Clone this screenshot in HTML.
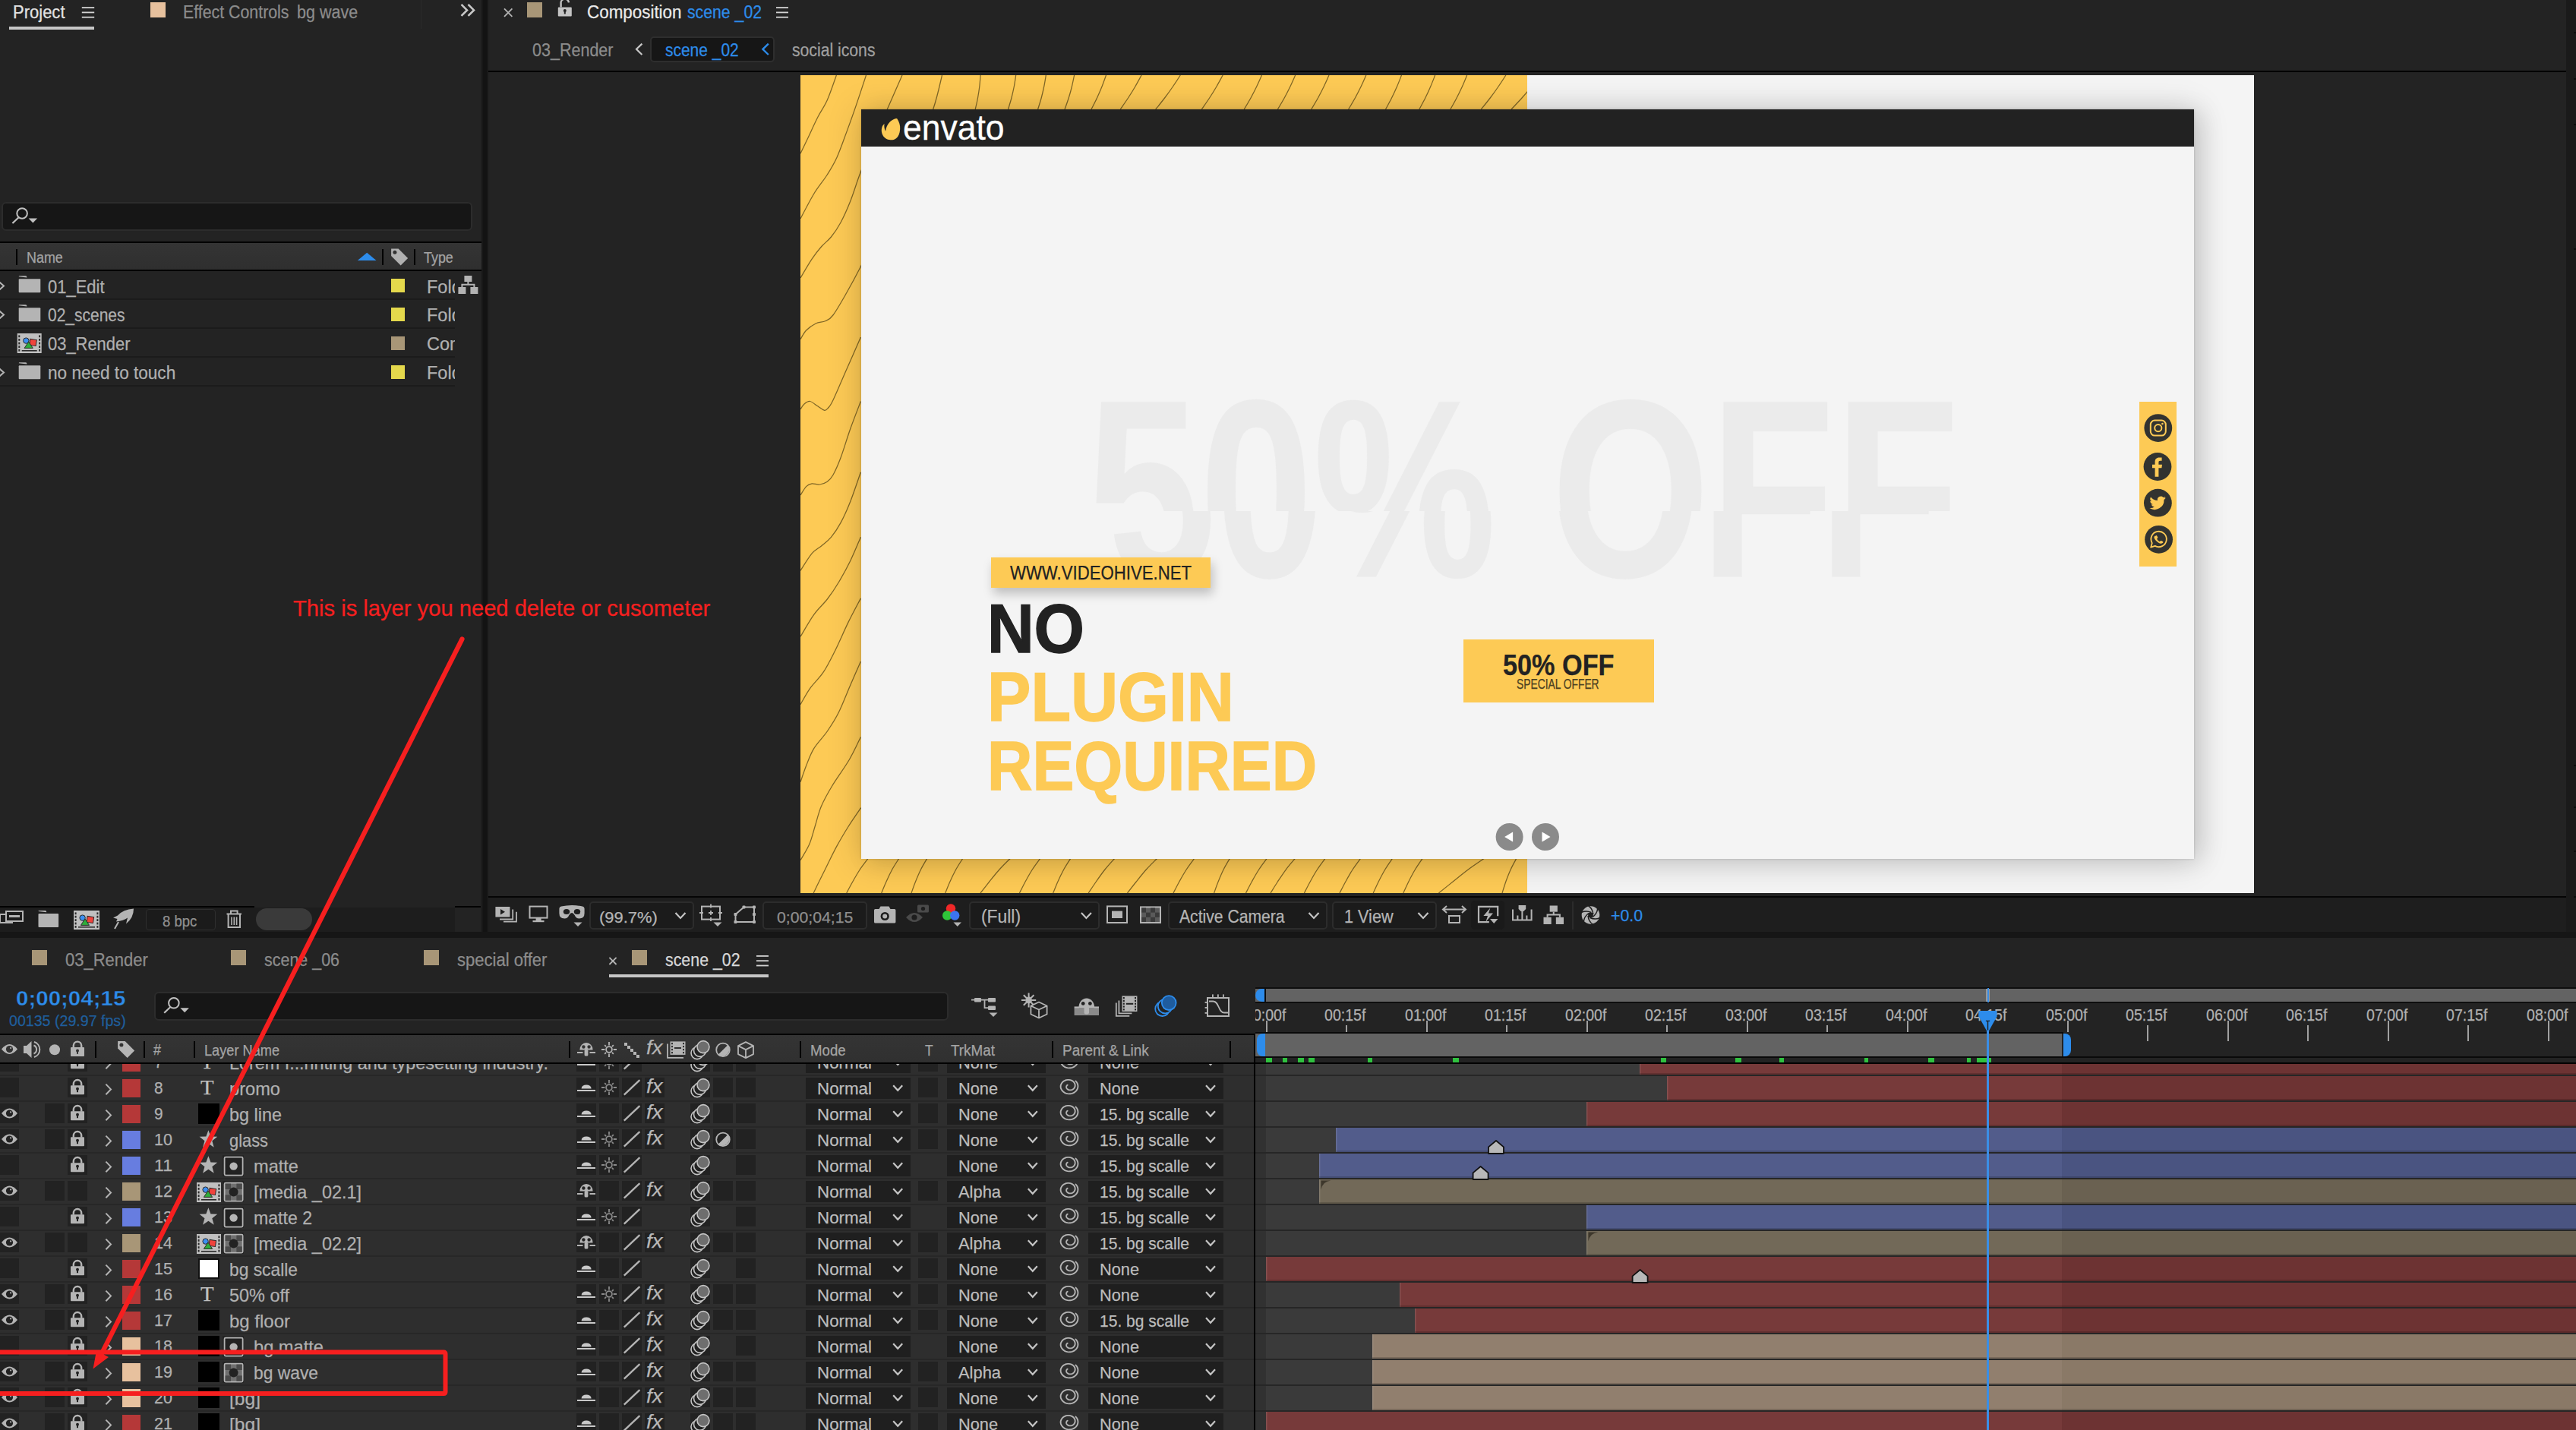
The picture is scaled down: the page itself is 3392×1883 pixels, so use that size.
<!DOCTYPE html><html lang="en"><head><meta charset="utf-8"><title>After Effects – scene _02</title><style>
html,body{margin:0;padding:0;background:#232323;}
body{width:3392px;height:1883px;position:relative;overflow:hidden;font-family:"Liberation Sans",sans-serif;}
#root{position:absolute;left:0;top:0;width:3392px;height:1883px;overflow:hidden;}
#root div,#root svg,#root span.t{position:absolute;}
span.t{white-space:pre;transform-origin:left center;display:block;-webkit-text-stroke:0.25px currentColor;}
svg{overflow:visible;}svg.clip{overflow:hidden;}
</style></head><body><div id="root"><div style="left:634px;top:0px;width:9px;height:1228px;background:#181818;"></div><div style="left:636px;top:0px;width:5px;height:1228px;background:#131313;"></div><span class="t" id="t1" style="font-size:23px;line-height:23px;color:#e2e2e2;transform:scaleX(0.9568);left:16.6px;top:4.93px;">Project</span><div style="left:12px;top:35.2px;width:112px;height:3.8px;background:#c6c6c6;"></div><div style="left:198px;top:3px;width:20px;height:20px;background:#e7c19e;"></div><span class="t" id="t2" style="font-size:23px;line-height:23px;color:#8c8c8c;transform:scaleX(0.9274);left:241.2px;top:4.93px;">Effect Controls</span><span class="t" id="t3" style="font-size:23px;line-height:23px;color:#8c8c8c;transform:scaleX(0.9350);left:390.7px;top:4.93px;">bg wave</span><div style="left:554px;top:0px;width:1px;height:38px;background:#2b2b2b;"></div><div style="left:2px;top:265.6px;width:620px;height:38.4px;background:#161616;border:2px solid #2c2c2c;border-radius:6px;box-sizing:border-box;"></div><div style="left:0px;top:317.7px;width:633.5px;height:2px;background:#000;"></div><div style="left:0px;top:319.7px;width:633.5px;height:35.3px;background:linear-gradient(#343434,#2f2f2f);"></div><div style="left:0px;top:355px;width:633.5px;height:2px;background:#000;"></div><div style="left:21.4px;top:327.8px;width:2px;height:21px;background:#000;"></div><div style="left:503px;top:327.8px;width:2px;height:21px;background:#000;"></div><div style="left:545px;top:327.8px;width:2px;height:21px;background:#000;"></div><span class="t" id="t4" style="font-size:20.5px;line-height:20.5px;color:#a4a4a4;transform:scaleX(0.8741);left:34.5px;top:328.85px;">Name</span><span class="t" id="t5" style="font-size:20.5px;line-height:20.5px;color:#a4a4a4;transform:scaleX(0.8728);left:558.4px;top:328.85px;">Type</span><div style="left:0px;top:393.4px;width:599px;height:1.6px;background:#1b1b1b;"></div><span class="t" id="t6" style="font-size:23.5px;line-height:23.5px;color:#b0b0b0;transform:scaleX(0.9347);left:63.4px;top:366.51px;">01_Edit</span><div style="left:515px;top:366.6px;width:18.2px;height:18.4px;background:#e4d84c;"></div><div style="left:560px;top:357px;width:39.4px;height:36px;overflow:hidden"><span class="t" id="t7" style="font-size:23.5px;line-height:23.5px;color:#b0b0b0;left:2px;top:9.51px;">Folder</span></div><div style="left:0px;top:431.4px;width:599px;height:1.6px;background:#1b1b1b;"></div><span class="t" id="t8" style="font-size:23.5px;line-height:23.5px;color:#b0b0b0;transform:scaleX(0.8929);left:63.4px;top:404.46px;">02_scenes</span><div style="left:515px;top:404.6px;width:18.2px;height:18.4px;background:#e4d84c;"></div><div style="left:560px;top:395px;width:39.4px;height:36px;overflow:hidden"><span class="t" id="t9" style="font-size:23.5px;line-height:23.5px;color:#b0b0b0;left:2px;top:9.46px;">Folder</span></div><div style="left:0px;top:469.4px;width:599px;height:1.6px;background:#1b1b1b;"></div><span class="t" id="t10" style="font-size:23.5px;line-height:23.5px;color:#b0b0b0;transform:scaleX(0.9330);left:63.4px;top:442.41px;">03_Render</span><div style="left:515px;top:442.6px;width:18.2px;height:18.4px;background:#a89677;"></div><div style="left:560px;top:433px;width:39.4px;height:36px;overflow:hidden"><span class="t" id="t11" style="font-size:23.5px;line-height:23.5px;color:#b0b0b0;left:2px;top:9.41px;">Composition</span></div><div style="left:0px;top:507.4px;width:599px;height:1.6px;background:#1b1b1b;"></div><span class="t" id="t12" style="font-size:23.5px;line-height:23.5px;color:#b0b0b0;transform:scaleX(0.9606);left:63.4px;top:480.36px;">no need to touch</span><div style="left:515px;top:480.6px;width:18.2px;height:18.4px;background:#e4d84c;"></div><div style="left:560px;top:471px;width:39.4px;height:36px;overflow:hidden"><span class="t" id="t13" style="font-size:23.5px;line-height:23.5px;color:#b0b0b0;left:2px;top:9.36px;">Folder</span></div><div style="left:0px;top:1194.6px;width:634px;height:33.4px;background:#1d1d1d;"></div><div style="left:0px;top:1192.6px;width:335px;height:2px;background:#000;"></div><div style="left:599px;top:1192.6px;width:34px;height:2px;background:#000;"></div><div style="left:599px;top:1195px;width:35px;height:33px;background:#232323;"></div><div style="left:192px;top:1197px;width:92px;height:28px;background:#1b1b1b;border:1.6px solid #2e2e2e;border-radius:4px;box-sizing:border-box;"></div><span class="t" id="t14" style="font-size:20px;line-height:20px;color:#909090;transform:scaleX(0.9277);left:214px;top:1203.07px;">8 bpc</span><div style="left:337px;top:1196.4px;width:74px;height:29px;background:#3a3a3a;border-radius:15px;"></div><div style="left:694px;top:3px;width:20px;height:20px;background:#a89677;"></div><span class="t" id="t15" style="font-size:23px;line-height:23px;color:#eaeaea;transform:scaleX(0.9738);left:772.5px;top:4.83px;">Composition</span><span class="t" id="t16" style="font-size:23px;line-height:23px;color:#2d8ceb;transform:scaleX(0.9233);left:904.5px;top:4.83px;">scene _02</span><span class="t" id="t17" style="font-size:23px;line-height:23px;color:#8c8c8c;transform:scaleX(0.9358);left:700.5px;top:55.03px;">03_Render</span><div style="left:855.8px;top:47.5px;width:164.2px;height:34.5px;background:#161616;border:2px solid #2e2e2e;border-radius:5px;box-sizing:border-box;"></div><span class="t" id="t18" style="font-size:23px;line-height:23px;color:#2d8ceb;transform:scaleX(0.9111);left:875.8px;top:55.03px;">scene _02</span><span class="t" id="t19" style="font-size:23px;line-height:23px;color:#a0a0a0;transform:scaleX(0.9210);left:1042.5px;top:55.03px;">social icons</span><div style="left:643px;top:93px;width:2736px;height:1.6px;background:#000;"></div><div style="left:3379px;top:0px;width:13px;height:1228px;background:#1a1a1a;"></div><div style="left:3389px;top:42px;width:3px;height:2.4px;background:#0c0c0c;"></div><div style="left:3389px;top:103px;width:3px;height:2.4px;background:#0c0c0c;"></div><div style="left:3389px;top:163px;width:3px;height:2.4px;background:#0c0c0c;"></div><div style="left:3389px;top:327px;width:3px;height:2.4px;background:#0c0c0c;"></div><div style="left:3389px;top:1007px;width:3px;height:2.4px;background:#0c0c0c;"></div><div style="left:3389px;top:1062px;width:3px;height:2.4px;background:#0c0c0c;"></div><div style="left:3389px;top:1120px;width:3px;height:2.4px;background:#0c0c0c;"></div><div style="left:3389px;top:1180px;width:3px;height:2.4px;background:#0c0c0c;"></div><div style="left:1054px;top:99px;width:1914px;height:1077px;background:#f4f4f4;overflow:hidden"><div style="left:0px;top:0px;width:957px;height:1077px;background:#fdca55;"></div><svg class="clip" style="left:0;top:0" width="957" height="1077" viewBox="0 0 957 1077" fill="none" stroke="#4a3c12" stroke-opacity="0.7" stroke-width="1.25"><path d="M47.4 0.0C45.4 5.5 39.4 23.5 35.3 32.8C31.2 42.0 26.9 47.3 22.7 55.5C18.5 63.7 14.0 74.0 10.2 82.0C6.4 90.0 1.7 99.8 0.0 103.3"/><path d="M86.5 0.0C84.3 6.7 77.4 27.8 73.1 40.4C68.8 53.0 64.7 64.3 60.5 75.6C56.3 86.9 52.1 99.2 47.9 108.4C43.7 117.6 40.3 123.0 35.3 131.0C30.3 139.0 23.6 146.5 17.7 156.2C11.8 165.9 2.9 183.5 0.0 189.0"/><path d="M134.0 0.0C130.8 7.3 121.0 29.3 114.7 44.0C108.4 58.7 101.9 74.1 96.0 88.0C90.1 101.9 84.5 114.2 79.4 127.3C74.3 140.3 70.0 155.2 65.6 166.3C61.2 177.4 57.2 186.2 53.0 194.0C48.8 201.8 44.6 207.8 40.4 213.0C36.2 218.2 32.0 220.7 27.8 225.5C23.6 230.3 19.8 235.0 15.2 241.9C10.6 248.8 2.5 262.8 0.0 267.0"/><path d="M186.5 0.0C184.6 7.3 181.1 25.7 175.0 44.0C168.9 62.3 159.2 89.0 150.0 110.0C140.8 131.0 129.2 151.7 120.0 170.0C110.8 188.3 101.8 206.3 95.0 220.0C88.2 233.7 85.2 240.8 79.4 252.0C73.7 263.2 66.6 276.3 60.5 287.0C54.4 297.7 47.5 309.9 42.9 316.0C38.3 322.1 36.6 321.9 32.8 323.7C29.0 325.5 24.4 324.9 20.2 327.0C16.0 329.1 11.0 332.6 7.6 336.0C4.2 339.4 1.3 345.8 0.0 347.7"/><path d="M79.4 345.0C76.2 352.2 66.6 374.2 60.5 388.0C54.4 401.8 46.9 419.7 42.9 428.0C38.9 436.3 38.5 435.8 36.6 438.0C34.7 440.2 33.9 441.7 31.6 441.3C29.3 440.9 25.9 437.8 22.7 435.8C19.5 433.8 15.6 430.0 12.7 429.5C9.8 429.0 7.1 431.2 5.0 433.0C2.9 434.8 0.8 438.8 0.0 440.0"/><path d="M79.4 429.5C77.1 435.6 70.0 453.6 65.6 466.0C61.2 478.4 56.8 493.7 53.0 503.8C49.2 513.9 45.9 521.2 42.9 526.5C39.9 531.8 38.2 533.2 35.3 535.3C32.4 537.4 28.7 538.6 25.3 539.0C21.9 539.4 18.1 537.4 15.1 537.8C12.1 538.2 10.1 539.1 7.6 541.6C5.1 544.1 1.3 551.1 0.0 553.0"/><path d="M79.4 522.7C77.1 529.2 70.0 550.6 65.6 561.7C61.2 572.8 57.2 581.6 53.0 589.4C48.8 597.2 44.6 603.2 40.4 608.3C36.2 613.3 32.0 616.1 27.8 619.7C23.6 623.3 19.8 624.2 15.2 629.7C10.6 635.2 2.5 648.6 0.0 652.4"/><path d="M79.4 608.3C77.1 613.5 70.4 629.9 65.6 639.8C60.8 649.7 55.5 659.1 50.5 667.5C45.5 675.9 40.8 682.9 35.3 690.0C29.8 697.1 23.6 702.1 17.7 710.3C11.8 718.5 2.9 734.5 0.0 739.3"/><path d="M79.4 688.9C76.7 694.1 68.7 708.8 63.0 720.4C57.3 732.0 50.9 747.3 45.4 758.2C39.9 769.1 35.8 777.7 30.3 785.9C24.9 794.1 17.8 800.2 12.7 807.3C7.6 814.4 2.1 825.1 0.0 828.7"/><path d="M79.4 772.0C77.1 777.2 70.4 792.4 65.6 803.5C60.8 814.6 55.5 828.7 50.5 838.8C45.5 848.9 40.8 856.0 35.3 864.0C29.8 872.0 22.3 879.1 17.7 886.6C13.1 894.1 10.5 901.9 7.6 909.3C4.7 916.6 1.3 927.1 0.0 930.7"/><path d="M79.4 871.5C76.9 876.4 70.9 890.1 64.5 901.0C58.1 911.9 47.4 926.4 41.2 936.7C35.0 947.0 30.9 954.5 27.3 963.0C23.7 971.5 22.1 979.7 19.5 988.0C16.9 996.3 14.9 1005.2 11.7 1012.8C8.4 1020.4 1.9 1030.3 0.0 1033.8"/><path d="M79.7 964.7C76.9 968.8 68.4 981.0 63.0 989.5C57.6 998.0 52.2 1007.4 47.5 1015.9C42.8 1024.5 38.9 1033.0 35.0 1040.8C31.1 1048.6 27.2 1056.5 24.2 1062.5C21.2 1068.5 18.4 1074.6 17.2 1077.0"/><path d="M237.1 0.0C236.9 2.5 236.4 10.0 235.8 15.0C235.2 20.0 234.4 25.0 233.5 30.0C232.6 35.0 230.8 42.5 230.2 45.0"/><path d="M283.7 0.0C283.3 2.5 282.3 10.0 281.3 15.0C280.3 20.0 279.2 25.0 277.9 30.0C276.6 35.0 274.2 42.5 273.5 45.0"/><path d="M323.3 0.0C322.9 2.5 321.8 10.0 320.7 15.0C319.7 20.0 318.5 25.0 317.2 30.0C315.8 35.0 313.4 42.5 312.6 45.0"/><path d="M360.6 0.0C360.1 2.5 358.6 10.0 357.4 15.0C356.2 20.0 354.8 25.0 353.2 30.0C351.6 35.0 348.9 42.5 348.0 45.0"/><path d="M402.5 0.0C401.6 2.5 399.0 10.0 397.0 15.0C395.0 20.0 392.8 25.0 390.5 30.0C388.2 35.0 384.2 42.5 383.0 45.0"/><path d="M449.1 0.0C447.7 2.5 443.7 10.0 440.8 15.0C437.9 20.0 434.8 25.0 431.5 30.0C428.2 35.0 422.9 42.5 421.2 45.0"/><path d="M500.3 0.0C498.7 2.5 493.9 10.0 490.4 15.0C487.0 20.0 483.4 25.0 479.6 30.0C475.8 35.0 469.7 42.5 467.7 45.0"/><path d="M556.2 0.0C554.8 2.5 550.8 10.0 547.9 15.0C545.0 20.0 541.9 25.0 538.6 30.0C535.3 35.0 530.0 42.5 528.3 45.0"/><path d="M607.5 0.0C606.4 2.5 603.2 10.0 600.7 15.0C598.3 20.0 595.7 25.0 593.0 30.0C590.2 35.0 585.7 42.5 584.2 45.0"/><path d="M651.7 0.0C650.6 2.5 647.4 10.0 644.9 15.0C642.5 20.0 639.9 25.0 637.2 30.0C634.4 35.0 629.9 42.5 628.4 45.0"/><path d="M696.0 0.0C694.9 2.5 691.7 10.0 689.2 15.0C686.8 20.0 684.2 25.0 681.5 30.0C678.7 35.0 674.2 42.5 672.7 45.0"/><path d="M744.9 0.0C743.8 2.5 740.6 10.0 738.1 15.0C735.7 20.0 733.1 25.0 730.4 30.0C727.6 35.0 723.1 42.5 721.6 45.0"/><path d="M791.5 0.0C790.5 2.5 787.7 10.0 785.5 15.0C783.3 20.0 781.0 25.0 778.5 30.0C776.0 35.0 771.8 42.5 770.5 45.0"/><path d="M835.7 0.0C834.7 2.5 831.9 10.0 829.7 15.0C827.6 20.0 825.3 25.0 822.8 30.0C820.3 35.0 816.1 42.5 814.8 45.0"/><path d="M877.7 0.0C876.7 2.5 873.7 10.0 871.4 15.0C869.1 20.0 866.7 25.0 864.1 30.0C861.5 35.0 857.2 42.5 855.8 45.0"/><path d="M928.9 0.0C927.3 2.5 922.5 10.0 919.0 15.0C915.6 20.0 912.0 25.0 908.2 30.0C904.4 35.0 898.3 42.5 896.3 45.0"/><path d="M975.0 0.0C973.0 2.5 967.2 10.0 963.0 15.0C958.8 20.0 954.5 25.0 950.0 30.0C945.5 35.0 938.3 42.5 936.0 45.0"/><path d="M89.4 1031.0C87.6 1033.5 81.8 1040.8 78.3 1046.0C74.9 1051.2 71.7 1056.8 68.8 1062.0C65.8 1067.2 62.0 1074.5 60.7 1077.0"/><path d="M130.0 1031.0C128.5 1033.5 123.6 1040.8 120.7 1046.0C117.9 1051.2 115.3 1056.8 113.0 1062.0C110.6 1067.2 107.7 1074.5 106.7 1077.0"/><path d="M167.0 1031.0C165.6 1033.5 161.1 1040.8 158.5 1046.0C155.9 1051.2 153.6 1056.8 151.5 1062.0C149.4 1067.2 146.9 1074.5 146.0 1077.0"/><path d="M214.0 1031.0C212.4 1033.5 207.6 1040.8 204.7 1046.0C201.9 1051.2 199.2 1056.8 196.9 1062.0C194.6 1067.2 191.7 1074.5 190.6 1077.0"/><path d="M276.7 1031.0C274.2 1033.5 266.6 1040.8 262.0 1046.0C257.3 1051.2 252.9 1056.8 248.7 1062.0C244.6 1067.2 239.0 1074.5 237.0 1077.0"/><path d="M316.0 1031.0C314.2 1033.5 308.6 1040.8 305.3 1046.0C302.0 1051.2 298.9 1056.8 296.1 1062.0C293.3 1067.2 289.7 1074.5 288.4 1077.0"/><path d="M356.0 1031.0C354.4 1033.5 349.5 1040.8 346.7 1046.0C343.9 1051.2 341.2 1056.8 338.9 1062.0C336.6 1067.2 333.7 1074.5 332.6 1077.0"/><path d="M414.0 1031.0C411.8 1033.5 405.0 1040.8 400.9 1046.0C396.8 1051.2 392.9 1056.8 389.3 1062.0C385.7 1067.2 380.9 1074.5 379.2 1077.0"/><path d="M470.0 1031.0C467.6 1033.5 460.0 1040.8 455.3 1046.0C450.7 1051.2 446.3 1056.8 442.2 1062.0C438.0 1067.2 432.4 1074.5 430.5 1077.0"/><path d="M519.0 1031.0C517.2 1033.5 511.5 1040.8 508.2 1046.0C504.8 1051.2 501.7 1056.8 498.8 1062.0C496.0 1067.2 492.3 1074.5 491.0 1077.0"/><path d="M565.6 1031.0C564.2 1033.5 559.7 1040.8 557.1 1046.0C554.5 1051.2 552.2 1056.8 550.1 1062.0C548.0 1067.2 545.5 1074.5 544.6 1077.0"/><path d="M614.5 1031.0C612.7 1033.5 607.0 1040.8 603.7 1046.0C600.3 1051.2 597.2 1056.8 594.3 1062.0C591.5 1067.2 587.8 1074.5 586.5 1077.0"/><path d="M651.7 1031.0C649.6 1033.5 643.2 1040.8 639.3 1046.0C635.4 1051.2 631.8 1056.8 628.4 1062.0C625.0 1067.2 620.6 1074.5 619.0 1077.0"/><path d="M691.3 1031.0C689.5 1033.5 683.9 1040.8 680.5 1046.0C677.1 1051.2 674.0 1056.8 671.2 1062.0C668.3 1067.2 664.7 1074.5 663.4 1077.0"/><path d="M737.9 1031.0C736.1 1033.5 730.5 1040.8 727.1 1046.0C723.8 1051.2 720.7 1056.8 717.8 1062.0C715.0 1067.2 711.3 1074.5 710.0 1077.0"/><path d="M779.8 1031.0C778.1 1033.5 772.9 1040.8 769.8 1046.0C766.7 1051.2 763.8 1056.8 761.2 1062.0C758.6 1067.2 755.4 1074.5 754.2 1077.0"/><path d="M819.4 1031.0C817.7 1033.5 812.5 1040.8 809.4 1046.0C806.3 1051.2 803.4 1056.8 800.8 1062.0C798.2 1067.2 795.0 1074.5 793.8 1077.0"/><path d="M901.0 1031.0C897.4 1033.5 886.3 1040.8 879.3 1046.0C872.3 1051.2 865.6 1056.8 859.1 1062.0C852.6 1067.2 843.5 1074.5 840.4 1077.0"/><path d="M943.0 1031.0C941.7 1033.5 937.5 1040.8 935.2 1046.0C932.8 1051.2 930.7 1056.8 928.8 1062.0C927.0 1067.2 924.8 1074.5 924.0 1077.0"/></svg><div style="left:79.6px;top:44.8px;width:1755.4px;height:986.8px;background:#f4f4f4;box-shadow:0 3px 42px 2px rgba(0,0,0,0.16),10px 2px 30px rgba(0,0,0,0.10),0 0 3px rgba(0,0,0,0.18);"></div><div style="left:79.6px;top:44.8px;width:1755.4px;height:49.4px;background:#222;"></div><div style="left:0;top:0;width:1914px;height:574.3px;overflow:hidden"><span class="t" id="t20" style="font-size:344px;line-height:344px;color:#ebebeb;font-weight:700;transform:scaleX(0.7813);left:375.5px;top:375.8px;">50% OFF</span></div><div style="left:0;top:574.3px;width:1914px;height:300px;overflow:hidden"><div style="left:0;top:-574.3px;width:1914px;height:1077px;transform-origin:957px 538px;transform:scale(0.95)"><span class="t" id="t21" style="font-size:344px;line-height:344px;color:#ebebeb;font-weight:700;transform:scaleX(0.7813);left:375.5px;top:375.8px;">50% OFF</span></div></div></div><span class="t" id="t22" style="font-size:47px;line-height:47px;color:#fff;transform:scaleX(0.9467);left:1188.6px;top:144.21px;-webkit-text-stroke:0.300px #fff;">envato</span><div style="left:1305px;top:733.6px;width:289px;height:40.6px;background:#fdca55;box-shadow:3px 8px 14px rgba(0,0,0,0.22);"></div><span class="t" id="t23" style="font-size:25.5px;line-height:25.5px;color:#222;transform:scaleX(0.8696);left:1329.8px;top:742.41px;">WWW.VIDEOHIVE.NET</span><span class="t" id="t24" style="font-size:90px;line-height:90px;color:#222;font-weight:700;transform:scaleX(0.9481);left:1300px;top:783.21px;-webkit-text-stroke:1.4px #222;">NO</span><span class="t" id="t25" style="font-size:90px;line-height:90px;color:#fdca55;font-weight:700;transform:scaleX(0.9558);left:1300px;top:873.21px;-webkit-text-stroke:1.4px #fdca55;">PLUGIN</span><span class="t" id="t26" style="font-size:90px;line-height:90px;color:#fdca55;font-weight:700;transform:scaleX(0.9136);left:1300px;top:963.82px;-webkit-text-stroke:1.4px #fdca55;">REQUIRED</span><div style="left:1927px;top:842px;width:250.6px;height:82.6px;background:#fdca55;"></div><span class="t" id="t27" style="font-size:38.5px;line-height:38.5px;color:#222;font-weight:700;transform:scaleX(0.8893);left:1979px;top:857.01px;">50% OFF</span><span class="t" id="t28" style="font-size:18px;line-height:18px;color:#4a4022;transform:scaleX(0.7682);left:1997.4px;top:891.76px;">SPECIAL OFFER</span><div style="left:2816.8px;top:528.9px;width:49.2px;height:217.4px;background:#fdca55;"></div><div style="left:643px;top:1180px;width:2736px;height:1.6px;background:#050505;"></div><div style="left:643px;top:1181.6px;width:2736px;height:45.4px;background:#1e1e1e;"></div><div style="left:775.7px;top:1186.6px;width:138.3px;height:37px;background:#1b1b1b;border:2px solid #2c2c2c;border-radius:5px;box-sizing:border-box;"></div><span class="t" id="t29" style="font-size:21px;line-height:21px;color:#b4b4b4;transform:scaleX(1.0445);left:789px;top:1196.62px;">(99.7%)</span><div style="left:1004px;top:1186.6px;width:138px;height:37px;background:#1b1b1b;border:2px solid #2c2c2c;border-radius:5px;box-sizing:border-box;"></div><span class="t" id="t30" style="font-size:21px;line-height:21px;color:#8e8e8e;transform:scaleX(1.0114);left:1022.6px;top:1196.62px;">0;00;04;15</span><div style="left:1275.7px;top:1186.6px;width:172px;height:37px;background:#1b1b1b;border:2px solid #2c2c2c;border-radius:5px;box-sizing:border-box;"></div><span class="t" id="t31" style="font-size:23px;line-height:23px;color:#b4b4b4;transform:scaleX(0.9925);left:1291.5px;top:1195.53px;">(Full)</span><div style="left:1537.8px;top:1186.6px;width:210.2px;height:37px;background:#1b1b1b;border:2px solid #2c2c2c;border-radius:5px;box-sizing:border-box;"></div><span class="t" id="t32" style="font-size:23px;line-height:23px;color:#b4b4b4;transform:scaleX(0.9189);left:1553.4px;top:1195.53px;">Active Camera</span><div style="left:1754.3px;top:1186.6px;width:137.7px;height:37px;background:#1b1b1b;border:2px solid #2c2c2c;border-radius:5px;box-sizing:border-box;"></div><span class="t" id="t33" style="font-size:23px;line-height:23px;color:#b4b4b4;transform:scaleX(0.9413);left:1769.8px;top:1195.53px;">1 View</span><span class="t" id="t34" style="font-size:21.5px;line-height:21.5px;color:#2d8ceb;transform:scaleX(0.9893);left:2121px;top:1195.8px;">+0.0</span><div style="left:1937.4px;top:1186px;width:43.6px;height:37.8px;background:#1a1a1a;border-radius:5px;"></div><div style="left:2070px;top:1186.6px;width:2.2px;height:37px;background:#2b2b2b;"></div><div style="left:0px;top:1227px;width:3392px;height:8px;background:#161616;"></div><div style="left:42px;top:1251px;width:20px;height:20px;background:#a89677;"></div><span class="t" id="t35" style="font-size:23px;line-height:23px;color:#8c8c8c;transform:scaleX(0.9560);left:86.4px;top:1252.93px;">03_Render</span><div style="left:304px;top:1251px;width:20px;height:20px;background:#a89677;"></div><span class="t" id="t36" style="font-size:23px;line-height:23px;color:#8c8c8c;transform:scaleX(0.9327);left:348px;top:1252.93px;">scene _06</span><div style="left:558px;top:1251px;width:20px;height:20px;background:#a89677;"></div><span class="t" id="t37" style="font-size:23px;line-height:23px;color:#8c8c8c;transform:scaleX(0.9580);left:602px;top:1252.93px;">special offer</span><div style="left:832px;top:1251px;width:20px;height:20px;background:#a89677;"></div><span class="t" id="t38" style="font-size:23px;line-height:23px;color:#d8d8d8;transform:scaleX(0.9290);left:876px;top:1252.93px;">scene _02</span><div style="left:802px;top:1283.2px;width:210px;height:3.8px;background:#c6c6c6;"></div><span class="t" id="t39" style="font-size:28.5px;line-height:28.5px;color:#2d8ceb;font-weight:700;transform:scaleX(1.0349);left:21.4px;top:1300.27px;-webkit-text-stroke:0.4px #232323;">0;00;04;15</span><span class="t" id="t40" style="font-size:20.5px;line-height:20.5px;color:#1f5e9c;transform:scaleX(0.9564);left:12px;top:1334.45px;">00135 (29.97 fps)</span><div style="left:202.7px;top:1306px;width:1046px;height:37.8px;background:#161616;border:2px solid #2c2c2c;border-radius:6px;box-sizing:border-box;"></div><div style="left:0px;top:1361.2px;width:1651px;height:2px;background:#000;"></div><div style="left:0px;top:1363px;width:1651px;height:36.2px;background:linear-gradient(#343434,#303030);"></div><div style="left:0;top:1401px;width:1651px;height:482px;background:#2e2e2e;overflow:hidden"><div style="left:0px;top:-20px;width:1651px;height:2px;background:#272727;"></div><div style="left:0px;top:-16px;width:25px;height:26px;background:#222;"></div><div style="left:89px;top:-16px;width:26px;height:26px;background:#222;"></div><div style="left:161px;top:-14px;width:24px;height:24px;background:#b53838;"></div><div style="left:759px;top:-16px;width:26px;height:26px;background:#222;"></div><div style="left:789px;top:-16px;width:26px;height:26px;background:#222;"></div><div style="left:819px;top:-16px;width:26px;height:26px;background:#222;"></div><div style="left:909px;top:-16px;width:26px;height:26px;background:#222;"></div><div style="left:939px;top:-16px;width:26px;height:26px;background:#222;"></div><div style="left:969px;top:-16px;width:26px;height:26px;background:#222;"></div><div style="left:1061px;top:-16px;width:138px;height:27.6px;background:#1f1f1f;"></div><div style="left:1209px;top:-16px;width:26px;height:26px;background:#222;"></div><div style="left:1247px;top:-16px;width:130px;height:27.6px;background:#1f1f1f;"></div><div style="left:1433px;top:-16px;width:178px;height:27.6px;background:#1f1f1f;"></div><div style="left:0px;top:14px;width:1651px;height:2px;background:#272727;"></div><div style="left:0px;top:18px;width:25px;height:26px;background:#222;"></div><div style="left:89px;top:18px;width:26px;height:26px;background:#222;"></div><div style="left:161px;top:20px;width:24px;height:24px;background:#b53838;"></div><div style="left:759px;top:18px;width:26px;height:26px;background:#222;"></div><div style="left:789px;top:18px;width:26px;height:26px;background:#222;"></div><div style="left:819px;top:18px;width:26px;height:26px;background:#222;"></div><div style="left:849px;top:18px;width:26px;height:26px;background:#222;"></div><div style="left:909px;top:18px;width:26px;height:26px;background:#222;"></div><div style="left:939px;top:18px;width:26px;height:26px;background:#222;"></div><div style="left:969px;top:18px;width:26px;height:26px;background:#222;"></div><div style="left:1061px;top:18px;width:138px;height:27.6px;background:#1f1f1f;"></div><div style="left:1209px;top:18px;width:26px;height:26px;background:#222;"></div><div style="left:1247px;top:18px;width:130px;height:27.6px;background:#1f1f1f;"></div><div style="left:1433px;top:18px;width:178px;height:27.6px;background:#1f1f1f;"></div><div style="left:0px;top:48px;width:1651px;height:2px;background:#272727;"></div><div style="left:0px;top:52px;width:25px;height:26px;background:#222;"></div><div style="left:59px;top:52px;width:26px;height:26px;background:#222;"></div><div style="left:89px;top:52px;width:26px;height:26px;background:#222;"></div><div style="left:161px;top:54px;width:24px;height:24px;background:#b53838;"></div><div style="left:261px;top:52px;width:28px;height:27.4px;background:#000;"></div><div style="left:759px;top:52px;width:26px;height:26px;background:#222;"></div><div style="left:789px;top:52px;width:26px;height:26px;background:#222;"></div><div style="left:819px;top:52px;width:26px;height:26px;background:#222;"></div><div style="left:849px;top:52px;width:26px;height:26px;background:#222;"></div><div style="left:909px;top:52px;width:26px;height:26px;background:#222;"></div><div style="left:939px;top:52px;width:26px;height:26px;background:#222;"></div><div style="left:969px;top:52px;width:26px;height:26px;background:#222;"></div><div style="left:1061px;top:52px;width:138px;height:27.6px;background:#1f1f1f;"></div><div style="left:1209px;top:52px;width:26px;height:26px;background:#222;"></div><div style="left:1247px;top:52px;width:130px;height:27.6px;background:#1f1f1f;"></div><div style="left:1433px;top:52px;width:178px;height:27.6px;background:#1f1f1f;"></div><div style="left:0px;top:82px;width:1651px;height:2px;background:#272727;"></div><div style="left:0px;top:86px;width:25px;height:26px;background:#222;"></div><div style="left:59px;top:86px;width:26px;height:26px;background:#222;"></div><div style="left:89px;top:86px;width:26px;height:26px;background:#222;"></div><div style="left:161px;top:88px;width:24px;height:24px;background:#677de0;"></div><div style="left:759px;top:86px;width:26px;height:26px;background:#222;"></div><div style="left:789px;top:86px;width:26px;height:26px;background:#222;"></div><div style="left:819px;top:86px;width:26px;height:26px;background:#222;"></div><div style="left:849px;top:86px;width:26px;height:26px;background:#222;"></div><div style="left:909px;top:86px;width:26px;height:26px;background:#222;"></div><div style="left:939px;top:86px;width:26px;height:26px;background:#222;"></div><div style="left:969px;top:86px;width:26px;height:26px;background:#222;"></div><div style="left:1061px;top:86px;width:138px;height:27.6px;background:#1f1f1f;"></div><div style="left:1209px;top:86px;width:26px;height:26px;background:#222;"></div><div style="left:1247px;top:86px;width:130px;height:27.6px;background:#1f1f1f;"></div><div style="left:1433px;top:86px;width:178px;height:27.6px;background:#1f1f1f;"></div><div style="left:0px;top:116px;width:1651px;height:2px;background:#272727;"></div><div style="left:0px;top:120px;width:25px;height:26px;background:#222;"></div><div style="left:89px;top:120px;width:26px;height:26px;background:#222;"></div><div style="left:161px;top:122px;width:24px;height:24px;background:#677de0;"></div><div style="left:293px;top:120.4px;width:28px;height:28px;background:#242424;"></div><div style="left:759px;top:120px;width:26px;height:26px;background:#222;"></div><div style="left:789px;top:120px;width:26px;height:26px;background:#222;"></div><div style="left:819px;top:120px;width:26px;height:26px;background:#222;"></div><div style="left:909px;top:120px;width:26px;height:26px;background:#222;"></div><div style="left:969px;top:120px;width:26px;height:26px;background:#222;"></div><div style="left:1061px;top:120px;width:138px;height:27.6px;background:#1f1f1f;"></div><div style="left:1247px;top:120px;width:130px;height:27.6px;background:#1f1f1f;"></div><div style="left:1433px;top:120px;width:178px;height:27.6px;background:#1f1f1f;"></div><div style="left:0px;top:150px;width:1651px;height:2px;background:#272727;"></div><div style="left:0px;top:154px;width:25px;height:26px;background:#222;"></div><div style="left:59px;top:154px;width:26px;height:26px;background:#222;"></div><div style="left:89px;top:154px;width:26px;height:26px;background:#222;"></div><div style="left:161px;top:156px;width:24px;height:24px;background:#a89677;"></div><div style="left:293px;top:154.4px;width:28px;height:28px;background:#242424;"></div><div style="left:759px;top:154px;width:26px;height:26px;background:#222;"></div><div style="left:789px;top:154px;width:26px;height:26px;background:#222;"></div><div style="left:819px;top:154px;width:26px;height:26px;background:#222;"></div><div style="left:849px;top:154px;width:26px;height:26px;background:#222;"></div><div style="left:909px;top:154px;width:26px;height:26px;background:#222;"></div><div style="left:939px;top:154px;width:26px;height:26px;background:#222;"></div><div style="left:969px;top:154px;width:26px;height:26px;background:#222;"></div><div style="left:1061px;top:154px;width:138px;height:27.6px;background:#1f1f1f;"></div><div style="left:1209px;top:154px;width:26px;height:26px;background:#222;"></div><div style="left:1247px;top:154px;width:130px;height:27.6px;background:#1f1f1f;"></div><div style="left:1433px;top:154px;width:178px;height:27.6px;background:#1f1f1f;"></div><div style="left:0px;top:184px;width:1651px;height:2px;background:#272727;"></div><div style="left:0px;top:188px;width:25px;height:26px;background:#222;"></div><div style="left:89px;top:188px;width:26px;height:26px;background:#222;"></div><div style="left:161px;top:190px;width:24px;height:24px;background:#677de0;"></div><div style="left:293px;top:188.4px;width:28px;height:28px;background:#242424;"></div><div style="left:759px;top:188px;width:26px;height:26px;background:#222;"></div><div style="left:789px;top:188px;width:26px;height:26px;background:#222;"></div><div style="left:819px;top:188px;width:26px;height:26px;background:#222;"></div><div style="left:909px;top:188px;width:26px;height:26px;background:#222;"></div><div style="left:969px;top:188px;width:26px;height:26px;background:#222;"></div><div style="left:1061px;top:188px;width:138px;height:27.6px;background:#1f1f1f;"></div><div style="left:1247px;top:188px;width:130px;height:27.6px;background:#1f1f1f;"></div><div style="left:1433px;top:188px;width:178px;height:27.6px;background:#1f1f1f;"></div><div style="left:0px;top:218px;width:1651px;height:2px;background:#272727;"></div><div style="left:0px;top:222px;width:25px;height:26px;background:#222;"></div><div style="left:59px;top:222px;width:26px;height:26px;background:#222;"></div><div style="left:89px;top:222px;width:26px;height:26px;background:#222;"></div><div style="left:161px;top:224px;width:24px;height:24px;background:#a89677;"></div><div style="left:293px;top:222.4px;width:28px;height:28px;background:#242424;"></div><div style="left:759px;top:222px;width:26px;height:26px;background:#222;"></div><div style="left:789px;top:222px;width:26px;height:26px;background:#222;"></div><div style="left:819px;top:222px;width:26px;height:26px;background:#222;"></div><div style="left:849px;top:222px;width:26px;height:26px;background:#222;"></div><div style="left:909px;top:222px;width:26px;height:26px;background:#222;"></div><div style="left:939px;top:222px;width:26px;height:26px;background:#222;"></div><div style="left:969px;top:222px;width:26px;height:26px;background:#222;"></div><div style="left:1061px;top:222px;width:138px;height:27.6px;background:#1f1f1f;"></div><div style="left:1209px;top:222px;width:26px;height:26px;background:#222;"></div><div style="left:1247px;top:222px;width:130px;height:27.6px;background:#1f1f1f;"></div><div style="left:1433px;top:222px;width:178px;height:27.6px;background:#1f1f1f;"></div><div style="left:0px;top:252px;width:1651px;height:2px;background:#272727;"></div><div style="left:0px;top:256px;width:25px;height:26px;background:#222;"></div><div style="left:89px;top:256px;width:26px;height:26px;background:#222;"></div><div style="left:161px;top:258px;width:24px;height:24px;background:#b53838;"></div><div style="left:261px;top:256px;width:28px;height:27.4px;background:#fff;border:2px solid #111;box-sizing:border-box;"></div><div style="left:759px;top:256px;width:26px;height:26px;background:#222;"></div><div style="left:789px;top:256px;width:26px;height:26px;background:#222;"></div><div style="left:819px;top:256px;width:26px;height:26px;background:#222;"></div><div style="left:909px;top:256px;width:26px;height:26px;background:#222;"></div><div style="left:969px;top:256px;width:26px;height:26px;background:#222;"></div><div style="left:1061px;top:256px;width:138px;height:27.6px;background:#1f1f1f;"></div><div style="left:1209px;top:256px;width:26px;height:26px;background:#222;"></div><div style="left:1247px;top:256px;width:130px;height:27.6px;background:#1f1f1f;"></div><div style="left:1433px;top:256px;width:178px;height:27.6px;background:#1f1f1f;"></div><div style="left:0px;top:286px;width:1651px;height:2px;background:#272727;"></div><div style="left:0px;top:290px;width:25px;height:26px;background:#222;"></div><div style="left:59px;top:290px;width:26px;height:26px;background:#222;"></div><div style="left:89px;top:290px;width:26px;height:26px;background:#222;"></div><div style="left:161px;top:292px;width:24px;height:24px;background:#b53838;"></div><div style="left:759px;top:290px;width:26px;height:26px;background:#222;"></div><div style="left:789px;top:290px;width:26px;height:26px;background:#222;"></div><div style="left:819px;top:290px;width:26px;height:26px;background:#222;"></div><div style="left:849px;top:290px;width:26px;height:26px;background:#222;"></div><div style="left:909px;top:290px;width:26px;height:26px;background:#222;"></div><div style="left:939px;top:290px;width:26px;height:26px;background:#222;"></div><div style="left:969px;top:290px;width:26px;height:26px;background:#222;"></div><div style="left:1061px;top:290px;width:138px;height:27.6px;background:#1f1f1f;"></div><div style="left:1209px;top:290px;width:26px;height:26px;background:#222;"></div><div style="left:1247px;top:290px;width:130px;height:27.6px;background:#1f1f1f;"></div><div style="left:1433px;top:290px;width:178px;height:27.6px;background:#1f1f1f;"></div><div style="left:0px;top:320px;width:1651px;height:2px;background:#272727;"></div><div style="left:0px;top:324px;width:25px;height:26px;background:#222;"></div><div style="left:59px;top:324px;width:26px;height:26px;background:#222;"></div><div style="left:89px;top:324px;width:26px;height:26px;background:#222;"></div><div style="left:161px;top:326px;width:24px;height:24px;background:#b53838;"></div><div style="left:261px;top:324px;width:28px;height:27.4px;background:#000;"></div><div style="left:759px;top:324px;width:26px;height:26px;background:#222;"></div><div style="left:789px;top:324px;width:26px;height:26px;background:#222;"></div><div style="left:819px;top:324px;width:26px;height:26px;background:#222;"></div><div style="left:849px;top:324px;width:26px;height:26px;background:#222;"></div><div style="left:909px;top:324px;width:26px;height:26px;background:#222;"></div><div style="left:939px;top:324px;width:26px;height:26px;background:#222;"></div><div style="left:969px;top:324px;width:26px;height:26px;background:#222;"></div><div style="left:1061px;top:324px;width:138px;height:27.6px;background:#1f1f1f;"></div><div style="left:1209px;top:324px;width:26px;height:26px;background:#222;"></div><div style="left:1247px;top:324px;width:130px;height:27.6px;background:#1f1f1f;"></div><div style="left:1433px;top:324px;width:178px;height:27.6px;background:#1f1f1f;"></div><div style="left:0px;top:354px;width:1651px;height:2px;background:#272727;"></div><div style="left:0px;top:358px;width:25px;height:26px;background:#222;"></div><div style="left:89px;top:358px;width:26px;height:26px;background:#222;"></div><div style="left:161px;top:360px;width:24px;height:24px;background:#e7c19e;"></div><div style="left:293px;top:358.4px;width:28px;height:28px;background:#242424;"></div><div style="left:261px;top:358px;width:28px;height:27.4px;background:#000;"></div><div style="left:759px;top:358px;width:26px;height:26px;background:#222;"></div><div style="left:789px;top:358px;width:26px;height:26px;background:#222;"></div><div style="left:819px;top:358px;width:26px;height:26px;background:#222;"></div><div style="left:849px;top:358px;width:26px;height:26px;background:#222;"></div><div style="left:909px;top:358px;width:26px;height:26px;background:#222;"></div><div style="left:969px;top:358px;width:26px;height:26px;background:#222;"></div><div style="left:1061px;top:358px;width:138px;height:27.6px;background:#1f1f1f;"></div><div style="left:1247px;top:358px;width:130px;height:27.6px;background:#1f1f1f;"></div><div style="left:1433px;top:358px;width:178px;height:27.6px;background:#1f1f1f;"></div><div style="left:0px;top:388px;width:1651px;height:2px;background:#272727;"></div><div style="left:0px;top:392px;width:25px;height:26px;background:#222;"></div><div style="left:59px;top:392px;width:26px;height:26px;background:#222;"></div><div style="left:89px;top:392px;width:26px;height:26px;background:#222;"></div><div style="left:161px;top:394px;width:24px;height:24px;background:#e7c19e;"></div><div style="left:293px;top:392.4px;width:28px;height:28px;background:#242424;"></div><div style="left:261px;top:392px;width:28px;height:27.4px;background:#000;"></div><div style="left:759px;top:392px;width:26px;height:26px;background:#222;"></div><div style="left:789px;top:392px;width:26px;height:26px;background:#222;"></div><div style="left:819px;top:392px;width:26px;height:26px;background:#222;"></div><div style="left:849px;top:392px;width:26px;height:26px;background:#222;"></div><div style="left:909px;top:392px;width:26px;height:26px;background:#222;"></div><div style="left:939px;top:392px;width:26px;height:26px;background:#222;"></div><div style="left:969px;top:392px;width:26px;height:26px;background:#222;"></div><div style="left:1061px;top:392px;width:138px;height:27.6px;background:#1f1f1f;"></div><div style="left:1209px;top:392px;width:26px;height:26px;background:#222;"></div><div style="left:1247px;top:392px;width:130px;height:27.6px;background:#1f1f1f;"></div><div style="left:1433px;top:392px;width:178px;height:27.6px;background:#1f1f1f;"></div><div style="left:0px;top:422px;width:1651px;height:2px;background:#272727;"></div><div style="left:0px;top:426px;width:25px;height:26px;background:#222;"></div><div style="left:59px;top:426px;width:26px;height:26px;background:#222;"></div><div style="left:89px;top:426px;width:26px;height:26px;background:#222;"></div><div style="left:161px;top:428px;width:24px;height:24px;background:#e7c19e;"></div><div style="left:261px;top:426px;width:28px;height:27.4px;background:#000;"></div><div style="left:759px;top:426px;width:26px;height:26px;background:#222;"></div><div style="left:789px;top:426px;width:26px;height:26px;background:#222;"></div><div style="left:819px;top:426px;width:26px;height:26px;background:#222;"></div><div style="left:849px;top:426px;width:26px;height:26px;background:#222;"></div><div style="left:909px;top:426px;width:26px;height:26px;background:#222;"></div><div style="left:939px;top:426px;width:26px;height:26px;background:#222;"></div><div style="left:969px;top:426px;width:26px;height:26px;background:#222;"></div><div style="left:1061px;top:426px;width:138px;height:27.6px;background:#1f1f1f;"></div><div style="left:1209px;top:426px;width:26px;height:26px;background:#222;"></div><div style="left:1247px;top:426px;width:130px;height:27.6px;background:#1f1f1f;"></div><div style="left:1433px;top:426px;width:178px;height:27.6px;background:#1f1f1f;"></div><div style="left:0px;top:456px;width:1651px;height:2px;background:#272727;"></div><div style="left:0px;top:460px;width:25px;height:26px;background:#222;"></div><div style="left:59px;top:460px;width:26px;height:26px;background:#222;"></div><div style="left:89px;top:460px;width:26px;height:26px;background:#222;"></div><div style="left:161px;top:462px;width:24px;height:24px;background:#b53838;"></div><div style="left:261px;top:460px;width:28px;height:27.4px;background:#000;"></div><div style="left:759px;top:460px;width:26px;height:26px;background:#222;"></div><div style="left:789px;top:460px;width:26px;height:26px;background:#222;"></div><div style="left:819px;top:460px;width:26px;height:26px;background:#222;"></div><div style="left:849px;top:460px;width:26px;height:26px;background:#222;"></div><div style="left:909px;top:460px;width:26px;height:26px;background:#222;"></div><div style="left:939px;top:460px;width:26px;height:26px;background:#222;"></div><div style="left:969px;top:460px;width:26px;height:26px;background:#222;"></div><div style="left:1061px;top:460px;width:138px;height:27.6px;background:#1f1f1f;"></div><div style="left:1209px;top:460px;width:26px;height:26px;background:#222;"></div><div style="left:1247px;top:460px;width:130px;height:27.6px;background:#1f1f1f;"></div><div style="left:1433px;top:460px;width:178px;height:27.6px;background:#1f1f1f;"></div></div><span class="t" id="t41" style="font-size:22.5px;line-height:22.5px;color:#b0b0b0;transform:scaleX(0.9268);left:203.2px;top:1421.75px;">8</span><span class="t" id="t42" style="font-size:27.5px;line-height:27.5px;color:#c0c0c0;font-family:'Liberation Serif', serif;transform:scaleX(1.0468);left:264px;top:1417.97px;">T</span><span class="t" id="t43" style="font-size:24px;line-height:24px;color:#b0b0b0;transform:scaleX(0.9848);left:301.6px;top:1421.88px;">promo</span><span class="t" id="t44" style="font-size:25.5px;line-height:25.5px;color:#b8b8b8;font-style:italic;transform:scaleX(1.0784);left:851px;top:1417.61px;">fx</span><span class="t" id="t45" style="font-size:22.5px;line-height:22.5px;color:#bcbcbc;transform:scaleX(0.9929);left:1076px;top:1422.65px;">Normal</span><span class="t" id="t46" style="font-size:22.5px;line-height:22.5px;color:#bcbcbc;transform:scaleX(0.9666);left:1261.6px;top:1422.65px;">None</span><span class="t" id="t47" style="font-size:22.5px;line-height:22.5px;color:#bcbcbc;transform:scaleX(0.9666);left:1448px;top:1422.65px;">None</span><span class="t" id="t48" style="font-size:22.5px;line-height:22.5px;color:#b0b0b0;transform:scaleX(0.9268);left:203.2px;top:1455.75px;">9</span><span class="t" id="t49" style="font-size:24px;line-height:24px;color:#b0b0b0;transform:scaleX(0.9755);left:301.6px;top:1455.88px;">bg line</span><span class="t" id="t50" style="font-size:25.5px;line-height:25.5px;color:#b8b8b8;font-style:italic;transform:scaleX(1.0784);left:851px;top:1451.61px;">fx</span><span class="t" id="t51" style="font-size:22.5px;line-height:22.5px;color:#bcbcbc;transform:scaleX(0.9929);left:1076px;top:1456.65px;">Normal</span><span class="t" id="t52" style="font-size:22.5px;line-height:22.5px;color:#bcbcbc;transform:scaleX(0.9666);left:1261.6px;top:1456.65px;">None</span><span class="t" id="t53" style="font-size:22.5px;line-height:22.5px;color:#bcbcbc;transform:scaleX(0.9340);left:1448px;top:1456.65px;">15. bg scalle</span><span class="t" id="t54" style="font-size:22.5px;line-height:22.5px;color:#b0b0b0;transform:scaleX(0.9588);left:203.2px;top:1489.75px;">10</span><span class="t" id="t55" style="font-size:24px;line-height:24px;color:#b0b0b0;transform:scaleX(0.9102);left:301.6px;top:1489.88px;">glass</span><span class="t" id="t56" style="font-size:25.5px;line-height:25.5px;color:#b8b8b8;font-style:italic;transform:scaleX(1.0784);left:851px;top:1485.61px;">fx</span><span class="t" id="t57" style="font-size:22.5px;line-height:22.5px;color:#bcbcbc;transform:scaleX(0.9929);left:1076px;top:1490.65px;">Normal</span><span class="t" id="t58" style="font-size:22.5px;line-height:22.5px;color:#bcbcbc;transform:scaleX(0.9666);left:1261.6px;top:1490.65px;">None</span><span class="t" id="t59" style="font-size:22.5px;line-height:22.5px;color:#bcbcbc;transform:scaleX(0.9340);left:1448px;top:1490.65px;">15. bg scalle</span><span class="t" id="t60" style="font-size:22.5px;line-height:22.5px;color:#b0b0b0;transform:scaleX(1.0274);left:203.2px;top:1523.75px;">11</span><span class="t" id="t61" style="font-size:24px;line-height:24px;color:#b0b0b0;transform:scaleX(0.9828);left:333.6px;top:1523.88px;">matte</span><span class="t" id="t62" style="font-size:22.5px;line-height:22.5px;color:#bcbcbc;transform:scaleX(0.9929);left:1076px;top:1524.65px;">Normal</span><span class="t" id="t63" style="font-size:22.5px;line-height:22.5px;color:#bcbcbc;transform:scaleX(0.9666);left:1261.6px;top:1524.65px;">None</span><span class="t" id="t64" style="font-size:22.5px;line-height:22.5px;color:#bcbcbc;transform:scaleX(0.9340);left:1448px;top:1524.65px;">15. bg scalle</span><span class="t" id="t65" style="font-size:22.5px;line-height:22.5px;color:#b0b0b0;transform:scaleX(0.9588);left:203.2px;top:1557.75px;">12</span><span class="t" id="t66" style="font-size:24px;line-height:24px;color:#b0b0b0;transform:scaleX(0.9764);left:333.6px;top:1557.88px;">[media _02.1]</span><span class="t" id="t67" style="font-size:25.5px;line-height:25.5px;color:#b8b8b8;font-style:italic;transform:scaleX(1.0784);left:851px;top:1553.61px;">fx</span><span class="t" id="t68" style="font-size:22.5px;line-height:22.5px;color:#bcbcbc;transform:scaleX(0.9929);left:1076px;top:1558.65px;">Normal</span><span class="t" id="t69" style="font-size:22.5px;line-height:22.5px;color:#bcbcbc;transform:scaleX(0.9731);left:1261.6px;top:1558.65px;">Alpha</span><span class="t" id="t70" style="font-size:22.5px;line-height:22.5px;color:#bcbcbc;transform:scaleX(0.9340);left:1448px;top:1558.65px;">15. bg scalle</span><span class="t" id="t71" style="font-size:22.5px;line-height:22.5px;color:#b0b0b0;transform:scaleX(0.9588);left:203.2px;top:1591.75px;">13</span><span class="t" id="t72" style="font-size:24px;line-height:24px;color:#b0b0b0;transform:scaleX(0.9619);left:333.6px;top:1591.88px;">matte 2</span><span class="t" id="t73" style="font-size:22.5px;line-height:22.5px;color:#bcbcbc;transform:scaleX(0.9929);left:1076px;top:1592.65px;">Normal</span><span class="t" id="t74" style="font-size:22.5px;line-height:22.5px;color:#bcbcbc;transform:scaleX(0.9666);left:1261.6px;top:1592.65px;">None</span><span class="t" id="t75" style="font-size:22.5px;line-height:22.5px;color:#bcbcbc;transform:scaleX(0.9340);left:1448px;top:1592.65px;">15. bg scalle</span><span class="t" id="t76" style="font-size:22.5px;line-height:22.5px;color:#b0b0b0;transform:scaleX(0.9588);left:203.2px;top:1625.75px;">14</span><span class="t" id="t77" style="font-size:24px;line-height:24px;color:#b0b0b0;transform:scaleX(0.9764);left:333.6px;top:1625.88px;">[media _02.2]</span><span class="t" id="t78" style="font-size:25.5px;line-height:25.5px;color:#b8b8b8;font-style:italic;transform:scaleX(1.0784);left:851px;top:1621.61px;">fx</span><span class="t" id="t79" style="font-size:22.5px;line-height:22.5px;color:#bcbcbc;transform:scaleX(0.9929);left:1076px;top:1626.65px;">Normal</span><span class="t" id="t80" style="font-size:22.5px;line-height:22.5px;color:#bcbcbc;transform:scaleX(0.9731);left:1261.6px;top:1626.65px;">Alpha</span><span class="t" id="t81" style="font-size:22.5px;line-height:22.5px;color:#bcbcbc;transform:scaleX(0.9340);left:1448px;top:1626.65px;">15. bg scalle</span><span class="t" id="t82" style="font-size:22.5px;line-height:22.5px;color:#b0b0b0;transform:scaleX(0.9588);left:203.2px;top:1659.75px;">15</span><span class="t" id="t83" style="font-size:24px;line-height:24px;color:#b0b0b0;transform:scaleX(0.9500);left:301.6px;top:1659.88px;">bg scalle</span><span class="t" id="t84" style="font-size:22.5px;line-height:22.5px;color:#bcbcbc;transform:scaleX(0.9929);left:1076px;top:1660.65px;">Normal</span><span class="t" id="t85" style="font-size:22.5px;line-height:22.5px;color:#bcbcbc;transform:scaleX(0.9666);left:1261.6px;top:1660.65px;">None</span><span class="t" id="t86" style="font-size:22.5px;line-height:22.5px;color:#bcbcbc;transform:scaleX(0.9666);left:1448px;top:1660.65px;">None</span><span class="t" id="t87" style="font-size:22.5px;line-height:22.5px;color:#b0b0b0;transform:scaleX(0.9588);left:203.2px;top:1693.75px;">16</span><span class="t" id="t88" style="font-size:27.5px;line-height:27.5px;color:#c0c0c0;font-family:'Liberation Serif', serif;transform:scaleX(1.0468);left:264px;top:1689.97px;">T</span><span class="t" id="t89" style="font-size:24px;line-height:24px;color:#b0b0b0;transform:scaleX(0.9759);left:301.6px;top:1693.88px;">50% off</span><span class="t" id="t90" style="font-size:25.5px;line-height:25.5px;color:#b8b8b8;font-style:italic;transform:scaleX(1.0784);left:851px;top:1689.61px;">fx</span><span class="t" id="t91" style="font-size:22.5px;line-height:22.5px;color:#bcbcbc;transform:scaleX(0.9929);left:1076px;top:1694.65px;">Normal</span><span class="t" id="t92" style="font-size:22.5px;line-height:22.5px;color:#bcbcbc;transform:scaleX(0.9666);left:1261.6px;top:1694.65px;">None</span><span class="t" id="t93" style="font-size:22.5px;line-height:22.5px;color:#bcbcbc;transform:scaleX(0.9666);left:1448px;top:1694.65px;">None</span><span class="t" id="t94" style="font-size:22.5px;line-height:22.5px;color:#b0b0b0;transform:scaleX(0.9588);left:203.2px;top:1727.75px;">17</span><span class="t" id="t95" style="font-size:24px;line-height:24px;color:#b0b0b0;transform:scaleX(0.9992);left:301.6px;top:1727.88px;">bg floor</span><span class="t" id="t96" style="font-size:25.5px;line-height:25.5px;color:#b8b8b8;font-style:italic;transform:scaleX(1.0784);left:851px;top:1723.61px;">fx</span><span class="t" id="t97" style="font-size:22.5px;line-height:22.5px;color:#bcbcbc;transform:scaleX(0.9929);left:1076px;top:1728.65px;">Normal</span><span class="t" id="t98" style="font-size:22.5px;line-height:22.5px;color:#bcbcbc;transform:scaleX(0.9666);left:1261.6px;top:1728.65px;">None</span><span class="t" id="t99" style="font-size:22.5px;line-height:22.5px;color:#bcbcbc;transform:scaleX(0.9340);left:1448px;top:1728.65px;">15. bg scalle</span><span class="t" id="t100" style="font-size:22.5px;line-height:22.5px;color:#b0b0b0;transform:scaleX(0.9588);left:203.2px;top:1761.75px;">18</span><span class="t" id="t101" style="font-size:24px;line-height:24px;color:#b0b0b0;transform:scaleX(0.9851);left:333.6px;top:1761.88px;">bg matte</span><span class="t" id="t102" style="font-size:25.5px;line-height:25.5px;color:#b8b8b8;font-style:italic;transform:scaleX(1.0784);left:851px;top:1757.61px;">fx</span><span class="t" id="t103" style="font-size:22.5px;line-height:22.5px;color:#bcbcbc;transform:scaleX(0.9929);left:1076px;top:1762.65px;">Normal</span><span class="t" id="t104" style="font-size:22.5px;line-height:22.5px;color:#bcbcbc;transform:scaleX(0.9666);left:1261.6px;top:1762.65px;">None</span><span class="t" id="t105" style="font-size:22.5px;line-height:22.5px;color:#bcbcbc;transform:scaleX(0.9666);left:1448px;top:1762.65px;">None</span><span class="t" id="t106" style="font-size:22.5px;line-height:22.5px;color:#b0b0b0;transform:scaleX(0.9588);left:203.2px;top:1795.75px;">19</span><span class="t" id="t107" style="font-size:24px;line-height:24px;color:#b0b0b0;transform:scaleX(0.9509);left:333.6px;top:1795.88px;">bg wave</span><span class="t" id="t108" style="font-size:25.5px;line-height:25.5px;color:#b8b8b8;font-style:italic;transform:scaleX(1.0784);left:851px;top:1791.61px;">fx</span><span class="t" id="t109" style="font-size:22.5px;line-height:22.5px;color:#bcbcbc;transform:scaleX(0.9929);left:1076px;top:1796.65px;">Normal</span><span class="t" id="t110" style="font-size:22.5px;line-height:22.5px;color:#bcbcbc;transform:scaleX(0.9731);left:1261.6px;top:1796.65px;">Alpha</span><span class="t" id="t111" style="font-size:22.5px;line-height:22.5px;color:#bcbcbc;transform:scaleX(0.9666);left:1448px;top:1796.65px;">None</span><span class="t" id="t112" style="font-size:22.5px;line-height:22.5px;color:#b0b0b0;transform:scaleX(0.9588);left:203.2px;top:1829.75px;">20</span><span class="t" id="t113" style="font-size:24px;line-height:24px;color:#b0b0b0;transform:scaleX(1.0242);left:301.6px;top:1829.88px;">[bg]</span><span class="t" id="t114" style="font-size:25.5px;line-height:25.5px;color:#b8b8b8;font-style:italic;transform:scaleX(1.0784);left:851px;top:1825.61px;">fx</span><span class="t" id="t115" style="font-size:22.5px;line-height:22.5px;color:#bcbcbc;transform:scaleX(0.9929);left:1076px;top:1830.65px;">Normal</span><span class="t" id="t116" style="font-size:22.5px;line-height:22.5px;color:#bcbcbc;transform:scaleX(0.9666);left:1261.6px;top:1830.65px;">None</span><span class="t" id="t117" style="font-size:22.5px;line-height:22.5px;color:#bcbcbc;transform:scaleX(0.9666);left:1448px;top:1830.65px;">None</span><span class="t" id="t118" style="font-size:22.5px;line-height:22.5px;color:#b0b0b0;transform:scaleX(0.9588);left:203.2px;top:1863.75px;">21</span><span class="t" id="t119" style="font-size:24px;line-height:24px;color:#b0b0b0;transform:scaleX(1.0242);left:301.6px;top:1863.88px;">[bg]</span><span class="t" id="t120" style="font-size:25.5px;line-height:25.5px;color:#b8b8b8;font-style:italic;transform:scaleX(1.0784);left:851px;top:1859.61px;">fx</span><span class="t" id="t121" style="font-size:22.5px;line-height:22.5px;color:#bcbcbc;transform:scaleX(0.9929);left:1076px;top:1864.65px;">Normal</span><span class="t" id="t122" style="font-size:22.5px;line-height:22.5px;color:#bcbcbc;transform:scaleX(0.9666);left:1261.6px;top:1864.65px;">None</span><span class="t" id="t123" style="font-size:22.5px;line-height:22.5px;color:#bcbcbc;transform:scaleX(0.9666);left:1448px;top:1864.65px;">None</span><div style="left:0;top:1401px;width:1651px;height:14px;overflow:hidden"><span class="t" id="t124" style="font-size:22.5px;line-height:22.5px;color:#b0b0b0;transform:scaleX(0.9268);left:203.2px;top:-13.25px;">7</span><span class="t" id="t125" style="font-size:27.5px;line-height:27.5px;color:#c0c0c0;font-family:'Liberation Serif', serif;transform:scaleX(1.0468);left:264px;top:-17.03px;">T</span><span class="t" id="t126" style="font-size:24px;line-height:24px;color:#b0b0b0;transform:scaleX(0.9727);left:301.6px;top:-13.12px;">Lorem I...rinting and typesetting industry.</span><span class="t" id="t127" style="font-size:22.5px;line-height:22.5px;color:#bcbcbc;transform:scaleX(0.9929);left:1076px;top:-12.35px;">Normal</span><span class="t" id="t128" style="font-size:22.5px;line-height:22.5px;color:#bcbcbc;transform:scaleX(0.9666);left:1261.6px;top:-12.35px;">None</span><span class="t" id="t129" style="font-size:22.5px;line-height:22.5px;color:#bcbcbc;transform:scaleX(0.9666);left:1448px;top:-12.35px;">None</span><svg style="left:0;top:0" width="1651" height="14" viewBox="0 0 1651 14"><rect x="93" y="-5.7" width="18" height="12" rx="1" fill="#b4b4b4"/><path d="M96.8 -5.2V-7.8a5.2 5.2 0 0 1 10.4 0V-5.2" fill="none" stroke="#b4b4b4" stroke-width="2.4"/><circle cx="102" cy="-1.2" r="2" fill="#222"/><rect x="101" y="-1.2" width="2" height="4.4" fill="#222"/><path d="M139.4 -7.4L146 -0.6L139.4 6.2" fill="none" stroke="#b4b4b4" stroke-width="2"/><rect x="760" y="0" width="24" height="2" fill="#c8c8c8"/><path d="M765.6 -1.6a6.5 5 0 0 1 13 0z" fill="#c8c8c8"/><circle cx="802" cy="-3" r="3.9" fill="none" stroke="#8a8a8a" stroke-width="1.8"/><path d="M807.6 -3L812 -3M805.96 0.96L807.8 2.8M802 2.6L802 7M798.04 0.96L796.2 2.8M796.4 -3L792 -3M798.04 -6.96L796.2 -8.8M802 -8.6L802 -13M805.96 -6.96L807.8 -8.8" stroke="#8a8a8a" stroke-width="1.8" fill="none"/><path d="M821.8 6.6L842.4 -12.8" stroke="#b4b4b4" stroke-width="2.4" fill="none"/><circle cx="918" cy="1.6" r="8" fill="#222" stroke="#c4c4c4" stroke-width="1.6"/><circle cx="921.6" cy="-1.6" r="8" fill="#222" stroke="#c4c4c4" stroke-width="1.6"/><circle cx="926" cy="-6.4" r="8" fill="#6e6e6e" stroke="#c4c4c4" stroke-width="1.6"/><polyline points="1416.5,-11.47 1417.74,-10.01 1418.65,-8.39 1419.23,-6.64 1419.44,-4.83 1419.28,-3.01 1418.76,-1.25 1417.88,0.4 1416.69,1.88 1415.22,3.15 1413.51,4.17 1411.63,4.9 1409.62,5.32 1407.57,5.41 1405.53,5.18 1403.57,4.63 1401.75,3.78 1400.13,2.65 1398.77,1.28 1397.71,-0.28 1396.98,-1.98 1396.61,-3.77 1396.69,-5.58 1397.26,-7.31 1398.17,-8.88 1399.35,-10.26 1400.77,-11.4 1402.37,-12.27 1404.08,-12.86 1405.84,-13.16 1407.6,-13.17 1409.29,-12.9 1410.86,-12.37 1412.26,-11.62 1413.45,-10.68 1414.41,-9.59 1415.11,-8.4 1415.53,-7.15 1415.69,-5.88 1415.58,-4.64 1415.23,-3.48 1414.66,-2.43 1413.9,-1.51 1412.99,-0.76 1411.97,-0.19 1410.89,0.2 1409.79,0.39 1408.7,0.39 1407.67,0.23 1406.73,-0.1 1405.91,-0.55 1405.23,-1.11 1404.7,-1.75 1404.34,-2.43 1404.14,-3.13 1404.1,-3.81 1404.21,-4.46 1404.44,-5.04 1404.78,-5.55 1405.2,-5.95 1405.68,-6.26" fill="none" stroke="#b4b4b4" stroke-width="1.9" stroke-linecap="round" stroke-linejoin="round"/><path d="M1176.2 -5.65L1182.2 0.85L1188.2 -5.65" fill="none" stroke="#c4c4c4" stroke-width="2.2"/><path d="M1353.8 -5.65L1359.8 0.85L1365.8 -5.65" fill="none" stroke="#c4c4c4" stroke-width="2.2"/><path d="M1588 -5.65L1594 0.85L1600 -5.65" fill="none" stroke="#c4c4c4" stroke-width="2.2"/></svg></div><div style="left:0px;top:1399.2px;width:1651px;height:2px;background:#000;"></div><div style="left:125px;top:1371.4px;width:2px;height:21.2px;background:#000;"></div><div style="left:189px;top:1371.4px;width:2px;height:21.2px;background:#000;"></div><div style="left:255px;top:1371.4px;width:2px;height:21.2px;background:#000;"></div><div style="left:749px;top:1371.4px;width:2px;height:21.2px;background:#000;"></div><div style="left:1053px;top:1371.4px;width:2px;height:21.2px;background:#000;"></div><div style="left:1385px;top:1371.4px;width:2px;height:21.2px;background:#000;"></div><div style="left:1619px;top:1371.4px;width:2px;height:21.2px;background:#000;"></div><span class="t" id="t130" style="font-size:20px;line-height:20px;color:#a4a4a4;transform:scaleX(0.8989);left:202.4px;top:1372.07px;">#</span><span class="t" id="t131" style="font-size:21px;line-height:21px;color:#a4a4a4;transform:scaleX(0.8655);left:268.8px;top:1372.02px;">Layer Name</span><span class="t" id="t132" style="font-size:21px;line-height:21px;color:#a4a4a4;transform:scaleX(0.8871);left:1066.6px;top:1372.02px;">Mode</span><span class="t" id="t133" style="font-size:21px;line-height:21px;color:#a4a4a4;transform:scaleX(0.8263);left:1217.6px;top:1372.02px;">T</span><span class="t" id="t134" style="font-size:21px;line-height:21px;color:#a4a4a4;transform:scaleX(0.8984);left:1252px;top:1372.02px;">TrkMat</span><span class="t" id="t135" style="font-size:21px;line-height:21px;color:#a4a4a4;transform:scaleX(0.9018);left:1398.8px;top:1372.02px;">Parent &amp; Link</span><span class="t" id="t136" style="font-size:25.5px;line-height:25.5px;color:#b4b4b4;font-style:italic;transform:scaleX(1.0784);left:851px;top:1367.41px;">fx</span><div style="left:1651px;top:1300px;width:1741px;height:583px;background:#232323;"></div><div style="left:1651px;top:1361.2px;width:2px;height:522px;background:#000;"></div><div style="left:1653px;top:1300.4px;width:1739px;height:2px;background:#0e0e0e;"></div><div style="left:1653px;top:1302.4px;width:1739px;height:16.6px;background:#636363;"></div><div style="left:1653px;top:1319px;width:1739px;height:1.8px;background:#0e0e0e;"></div><div style="left:1653px;top:1302.4px;width:12.4px;height:16.6px;background:#2d8ceb;border-radius:9px 0 0 9px;"></div><div style="left:1665.2px;top:1302.4px;width:1.8px;height:16.6px;background:#0e0e0e;"></div><div style="left:2615.4px;top:1302px;width:5px;height:17px;background:#9a9a9a;"></div><div style="left:2616.6px;top:1300.6px;width:2.6px;height:19px;background:#3a8ee6;"></div><div style="left:1653px;top:1320px;width:1739px;height:42px;overflow:hidden"><span class="t" id="t137" style="font-size:22px;line-height:22px;color:#b0b0b0;transform:scaleX(0.8893);left:-14.3px;top:5.58px;">00:00f</span><span class="t" id="t138" style="font-size:22px;line-height:22px;color:#b0b0b0;transform:scaleX(0.8893);left:91.2px;top:5.58px;">00:15f</span><span class="t" id="t139" style="font-size:22px;line-height:22px;color:#b0b0b0;transform:scaleX(0.8893);left:196.7px;top:5.58px;">01:00f</span><span class="t" id="t140" style="font-size:22px;line-height:22px;color:#b0b0b0;transform:scaleX(0.8893);left:302.2px;top:5.58px;">01:15f</span><span class="t" id="t141" style="font-size:22px;line-height:22px;color:#b0b0b0;transform:scaleX(0.8893);left:407.7px;top:5.58px;">02:00f</span><span class="t" id="t142" style="font-size:22px;line-height:22px;color:#b0b0b0;transform:scaleX(0.8893);left:513.2px;top:5.58px;">02:15f</span><span class="t" id="t143" style="font-size:22px;line-height:22px;color:#b0b0b0;transform:scaleX(0.8893);left:618.7px;top:5.58px;">03:00f</span><span class="t" id="t144" style="font-size:22px;line-height:22px;color:#b0b0b0;transform:scaleX(0.8893);left:724.2px;top:5.58px;">03:15f</span><span class="t" id="t145" style="font-size:22px;line-height:22px;color:#b0b0b0;transform:scaleX(0.8893);left:829.7px;top:5.58px;">04:00f</span><span class="t" id="t146" style="font-size:22px;line-height:22px;color:#b0b0b0;transform:scaleX(0.8893);left:935.2px;top:5.58px;">04:15f</span><span class="t" id="t147" style="font-size:22px;line-height:22px;color:#b0b0b0;transform:scaleX(0.8893);left:1040.7px;top:5.58px;">05:00f</span><span class="t" id="t148" style="font-size:22px;line-height:22px;color:#b0b0b0;transform:scaleX(0.8893);left:1146.2px;top:5.58px;">05:15f</span><span class="t" id="t149" style="font-size:22px;line-height:22px;color:#b0b0b0;transform:scaleX(0.8893);left:1251.7px;top:5.58px;">06:00f</span><span class="t" id="t150" style="font-size:22px;line-height:22px;color:#b0b0b0;transform:scaleX(0.8893);left:1357.2px;top:5.58px;">06:15f</span><span class="t" id="t151" style="font-size:22px;line-height:22px;color:#b0b0b0;transform:scaleX(0.8893);left:1462.7px;top:5.58px;">07:00f</span><span class="t" id="t152" style="font-size:22px;line-height:22px;color:#b0b0b0;transform:scaleX(0.8893);left:1568.2px;top:5.58px;">07:15f</span><span class="t" id="t153" style="font-size:22px;line-height:22px;color:#b0b0b0;transform:scaleX(0.8893);left:1673.7px;top:5.58px;">08:00f</span></div><div style="left:1667px;top:1343.8px;width:2px;height:15px;background:#a0a0a0;"></div><div style="left:1772px;top:1349.6px;width:2px;height:9.2px;background:#a0a0a0;"></div><div style="left:1878px;top:1343.8px;width:2px;height:15px;background:#a0a0a0;"></div><div style="left:1983px;top:1349.6px;width:2px;height:9.2px;background:#a0a0a0;"></div><div style="left:2089px;top:1343.8px;width:2px;height:15px;background:#a0a0a0;"></div><div style="left:2194px;top:1349.6px;width:2px;height:9.2px;background:#a0a0a0;"></div><div style="left:2300px;top:1343.8px;width:2px;height:15px;background:#a0a0a0;"></div><div style="left:2405px;top:1349.6px;width:2px;height:9.2px;background:#a0a0a0;"></div><div style="left:2511px;top:1343.8px;width:2px;height:15px;background:#a0a0a0;"></div><div style="left:2616px;top:1349.6px;width:2px;height:9.2px;background:#a0a0a0;"></div><div style="left:2722px;top:1343.8px;width:2px;height:15px;background:#a0a0a0;"></div><div style="left:2827px;top:1349.6px;width:2px;height:21px;background:#a0a0a0;"></div><div style="left:2933px;top:1343.8px;width:2px;height:26.8px;background:#a0a0a0;"></div><div style="left:3038px;top:1349.6px;width:2px;height:21px;background:#a0a0a0;"></div><div style="left:3144px;top:1343.8px;width:2px;height:26.8px;background:#a0a0a0;"></div><div style="left:3249px;top:1349.6px;width:2px;height:21px;background:#a0a0a0;"></div><div style="left:3355px;top:1343.8px;width:2px;height:26.8px;background:#a0a0a0;"></div><div style="left:1653px;top:1359px;width:1064px;height:2.2px;background:#0a0a0a;"></div><div style="left:1653px;top:1361.2px;width:1062px;height:29.6px;background:#636363;"></div><div style="left:1655px;top:1361.2px;width:10.8px;height:29.6px;background:#2d8ceb;border-radius:8px 0 0 8px;"></div><div style="left:2717px;top:1361.2px;width:10px;height:29.6px;background:#2d8ceb;border-radius:0 8px 8px 0;"></div><div style="left:1653px;top:1390.8px;width:1739px;height:1.8px;background:#0a0a0a;"></div><div style="left:1666.8px;top:1392.8px;width:8.2px;height:6.4px;background:#2fc23f;"></div><div style="left:1688.8px;top:1392.8px;width:6.2px;height:6.4px;background:#2fc23f;"></div><div style="left:1708.8px;top:1392.8px;width:8.2px;height:6.4px;background:#2fc23f;"></div><div style="left:1722.5px;top:1392.8px;width:8.7px;height:6.4px;background:#2fc23f;"></div><div style="left:1800.8px;top:1392.8px;width:6.2px;height:6.4px;background:#2fc23f;"></div><div style="left:1913.2px;top:1392.8px;width:7.8px;height:6.4px;background:#2fc23f;"></div><div style="left:2187px;top:1392.8px;width:7px;height:6.4px;background:#2fc23f;"></div><div style="left:2285.4px;top:1392.8px;width:7.2px;height:6.4px;background:#2fc23f;"></div><div style="left:2342.6px;top:1392.8px;width:6.4px;height:6.4px;background:#2fc23f;"></div><div style="left:2455px;top:1392.8px;width:5.4px;height:6.4px;background:#2fc23f;"></div><div style="left:2539.2px;top:1392.8px;width:7.4px;height:6.4px;background:#2fc23f;"></div><div style="left:2590.4px;top:1392.8px;width:5px;height:6.4px;background:#2fc23f;"></div><div style="left:2602.6px;top:1392.8px;width:19.9px;height:6.4px;background:#2fc23f;"></div><div style="left:1653px;top:1399.2px;width:1739px;height:2px;background:#000;"></div><div style="left:1653px;top:1401px;width:1739px;height:482px;background:#3a3a3a;overflow:hidden"><div style="left:0px;top:0px;width:14px;height:482px;background:#313131;"></div><div style="left:506px;top:-18px;width:1233px;height:32px;background:linear-gradient(90deg,#773a3a 0,#773a3a 556px,#6d3333 556px);box-shadow:inset 0 -2px 0 rgba(0,0,0,0.16),inset 1.4px 0 0 rgba(255,255,255,0.12);"></div><div style="left:0px;top:-20px;width:1739px;height:2px;background:#262626;"></div><div style="left:542px;top:16px;width:1197px;height:32px;background:linear-gradient(90deg,#773a3a 0,#773a3a 520px,#6d3333 520px);box-shadow:inset 0 -2px 0 rgba(0,0,0,0.16),inset 1.4px 0 0 rgba(255,255,255,0.12);"></div><div style="left:0px;top:14px;width:1739px;height:2px;background:#262626;"></div><div style="left:436px;top:50px;width:1303px;height:32px;background:linear-gradient(90deg,#773a3a 0,#773a3a 626px,#6d3333 626px);box-shadow:inset 0 -2px 0 rgba(0,0,0,0.16),inset 1.4px 0 0 rgba(255,255,255,0.12);"></div><div style="left:0px;top:48px;width:1739px;height:2px;background:#262626;"></div><div style="left:106px;top:84px;width:1633px;height:32px;background:linear-gradient(90deg,#525c8b 0,#525c8b 956px,#4a5481 956px);box-shadow:inset 0 -2px 0 rgba(0,0,0,0.16),inset 1.4px 0 0 rgba(255,255,255,0.12);"></div><div style="left:0px;top:82px;width:1739px;height:2px;background:#262626;"></div><div style="left:84px;top:118px;width:1655px;height:32px;background:linear-gradient(90deg,#525c8b 0,#525c8b 978px,#4a5481 978px);box-shadow:inset 0 -2px 0 rgba(0,0,0,0.16),inset 1.4px 0 0 rgba(255,255,255,0.12);"></div><div style="left:0px;top:116px;width:1739px;height:2px;background:#262626;"></div><div style="left:84px;top:152px;width:1655px;height:32px;background:linear-gradient(90deg,#726958 0,#726958 978px,#6a6151 978px);box-shadow:inset 0 -2px 0 rgba(0,0,0,0.16),inset 1.4px 0 0 rgba(255,255,255,0.12);"></div><div style="left:0px;top:150px;width:1739px;height:2px;background:#262626;"></div><div style="left:436px;top:186px;width:1303px;height:32px;background:linear-gradient(90deg,#525c8b 0,#525c8b 626px,#4a5481 626px);box-shadow:inset 0 -2px 0 rgba(0,0,0,0.16),inset 1.4px 0 0 rgba(255,255,255,0.12);"></div><div style="left:0px;top:184px;width:1739px;height:2px;background:#262626;"></div><div style="left:436px;top:220px;width:1303px;height:32px;background:linear-gradient(90deg,#726958 0,#726958 626px,#6a6151 626px);box-shadow:inset 0 -2px 0 rgba(0,0,0,0.16),inset 1.4px 0 0 rgba(255,255,255,0.12);"></div><div style="left:0px;top:218px;width:1739px;height:2px;background:#262626;"></div><div style="left:14px;top:254px;width:1725px;height:32px;background:linear-gradient(90deg,#773a3a 0,#773a3a 1048px,#6d3333 1048px);box-shadow:inset 0 -2px 0 rgba(0,0,0,0.16),inset 1.4px 0 0 rgba(255,255,255,0.12);"></div><div style="left:0px;top:252px;width:1739px;height:2px;background:#262626;"></div><div style="left:190px;top:288px;width:1549px;height:32px;background:linear-gradient(90deg,#773a3a 0,#773a3a 872px,#6d3333 872px);box-shadow:inset 0 -2px 0 rgba(0,0,0,0.16),inset 1.4px 0 0 rgba(255,255,255,0.12);"></div><div style="left:0px;top:286px;width:1739px;height:2px;background:#262626;"></div><div style="left:209.8px;top:322px;width:1529.2px;height:32px;background:linear-gradient(90deg,#773a3a 0,#773a3a 852.2px,#6d3333 852.2px);box-shadow:inset 0 -2px 0 rgba(0,0,0,0.16),inset 1.4px 0 0 rgba(255,255,255,0.12);"></div><div style="left:0px;top:320px;width:1739px;height:2px;background:#262626;"></div><div style="left:153.8px;top:356px;width:1585.2px;height:32px;background:linear-gradient(90deg,#917f6e 0,#917f6e 908.2px,#8a7967 908.2px);box-shadow:inset 0 -2px 0 rgba(0,0,0,0.16),inset 1.4px 0 0 rgba(255,255,255,0.12);"></div><div style="left:0px;top:354px;width:1739px;height:2px;background:#262626;"></div><div style="left:153.8px;top:390px;width:1585.2px;height:32px;background:linear-gradient(90deg,#917f6e 0,#917f6e 908.2px,#8a7967 908.2px);box-shadow:inset 0 -2px 0 rgba(0,0,0,0.16),inset 1.4px 0 0 rgba(255,255,255,0.12);"></div><div style="left:0px;top:388px;width:1739px;height:2px;background:#262626;"></div><div style="left:153.8px;top:424px;width:1585.2px;height:32px;background:linear-gradient(90deg,#917f6e 0,#917f6e 908.2px,#8a7967 908.2px);box-shadow:inset 0 -2px 0 rgba(0,0,0,0.16),inset 1.4px 0 0 rgba(255,255,255,0.12);"></div><div style="left:0px;top:422px;width:1739px;height:2px;background:#262626;"></div><div style="left:14px;top:458px;width:1725px;height:32px;background:linear-gradient(90deg,#773a3a 0,#773a3a 1048px,#6d3333 1048px);box-shadow:inset 0 -2px 0 rgba(0,0,0,0.16),inset 1.4px 0 0 rgba(255,255,255,0.12);"></div><div style="left:0px;top:456px;width:1739px;height:2px;background:#262626;"></div></div><div style="left:2616.01px;top:1344px;width:3px;height:539px;background:#3a8ee6;"></div><svg style="left:0;top:0" width="3392" height="1883" viewBox="0 0 3392 1883"><rect x="107.8" y="9.2" width="16.4" height="1.8" fill="#d4d4d4"/><rect x="107.8" y="15.5" width="16.4" height="1.8" fill="#d4d4d4"/><rect x="107.8" y="21.8" width="16.4" height="1.8" fill="#d4d4d4"/><path d="M607.5 5.9L615 13.4L607.5 20.9" fill="none" stroke="#c8c8c8" stroke-width="2.6"/><path d="M616.5 5.9L624 13.4L616.5 20.9" fill="none" stroke="#c8c8c8" stroke-width="2.6"/><circle cx="29.1" cy="281" r="6.8" fill="none" stroke="#c0c0c0" stroke-width="2"/><path d="M24.6 286.2L16.4 294" stroke="#c0c0c0" stroke-width="2.2" fill="none"/><path d="M37.6 287.5h11.5l-5.75 6z" fill="#c0c0c0"/><path d="M470.8 343L483.2 332.8L495.5 343Z" fill="#2d8ceb"/><g transform="translate(513.6 326) scale(1.0)"><path d="M1.5 1.5H11L23.5 14L14 23.5L1.5 11Z" fill="#b0b0b0"/><circle cx="6.3" cy="6.3" r="2.5" fill="#323232"/></g><path d="M24.7 364.2q0 -1 1 -1h8q1.2 0 1.6 1.2v1z" fill="#b4b4b4"/><rect x="24.7" y="367.2" width="28.6" height="18" rx="1" fill="#b4b4b4"/><path d="M-3 369.5L5 376.5L-3 383.5" fill="none" stroke="#b4b4b4" stroke-width="2"/><path d="M24.7 402.2q0 -1 1 -1h8q1.2 0 1.6 1.2v1z" fill="#b4b4b4"/><rect x="24.7" y="405.2" width="28.6" height="18" rx="1" fill="#b4b4b4"/><path d="M-3 407.5L5 414.5L-3 421.5" fill="none" stroke="#b4b4b4" stroke-width="2"/><rect x="22.7" y="439" width="32" height="26" fill="#c0c0c0"/><rect x="24.3" y="441.4" width="2" height="2.8" fill="#2a2a2a"/><rect x="51.1" y="441.4" width="2" height="2.8" fill="#2a2a2a"/><rect x="24.3" y="446" width="2" height="2.8" fill="#2a2a2a"/><rect x="51.1" y="446" width="2" height="2.8" fill="#2a2a2a"/><rect x="24.3" y="450.6" width="2" height="2.8" fill="#2a2a2a"/><rect x="51.1" y="450.6" width="2" height="2.8" fill="#2a2a2a"/><rect x="24.3" y="455.2" width="2" height="2.8" fill="#2a2a2a"/><rect x="51.1" y="455.2" width="2" height="2.8" fill="#2a2a2a"/><rect x="24.3" y="459.8" width="2" height="2.8" fill="#2a2a2a"/><rect x="51.1" y="459.8" width="2" height="2.8" fill="#2a2a2a"/><rect x="28.7" y="461" width="20" height="1.6" fill="#2a2a2a"/><rect x="39.2" y="447" width="8.6" height="8" fill="#f0433c" stroke="#2a2a2a" stroke-width="1" transform="rotate(8 43.7 451)"/><circle cx="34.3" cy="448.6" r="3.7" fill="#3c8ff0" stroke="#2a2a2a" stroke-width="1"/><path d="M32.1 458.4l5.6 -8.4l5.6 8.4z" fill="#2fae3a" stroke="#2a2a2a" stroke-width="1"/><path d="M24.7 478.2q0 -1 1 -1h8q1.2 0 1.6 1.2v1z" fill="#b4b4b4"/><rect x="24.7" y="481.2" width="28.6" height="18" rx="1" fill="#b4b4b4"/><path d="M-3 483.5L5 490.5L-3 497.5" fill="none" stroke="#b4b4b4" stroke-width="2"/><g transform="translate(603.4 363) scale(1.0)" fill="#b4b4b4"><rect x="8" y="0" width="10" height="8"/><rect x="0" y="15" width="10" height="9"/><rect x="16" y="15" width="10" height="9"/><path d="M13 8v4M5 15v-3.2h16v3.2" fill="none" stroke="#b4b4b4" stroke-width="2"/></g><rect x="0" y="1204" width="16" height="11" fill="none" stroke="#b4b4b4" stroke-width="2"/><rect x="8" y="1200" width="22" height="13" fill="#1d1d1d" stroke="#b4b4b4" stroke-width="2"/><rect x="12" y="1205" width="14" height="3" fill="#b4b4b4"/><path d="M50.5 1200q0 -1 1 -1h8q1.2 0 1.6 1.2v1z" fill="#b4b4b4"/><rect x="50.5" y="1203" width="26.6" height="18" rx="1" fill="#b4b4b4"/><rect x="97" y="1199" width="34" height="25" fill="#c0c0c0"/><rect x="98.6" y="1201.4" width="2" height="2.8" fill="#2a2a2a"/><rect x="127.4" y="1201.4" width="2" height="2.8" fill="#2a2a2a"/><rect x="98.6" y="1205.8" width="2" height="2.8" fill="#2a2a2a"/><rect x="127.4" y="1205.8" width="2" height="2.8" fill="#2a2a2a"/><rect x="98.6" y="1210.2" width="2" height="2.8" fill="#2a2a2a"/><rect x="127.4" y="1210.2" width="2" height="2.8" fill="#2a2a2a"/><rect x="98.6" y="1214.6" width="2" height="2.8" fill="#2a2a2a"/><rect x="127.4" y="1214.6" width="2" height="2.8" fill="#2a2a2a"/><rect x="98.6" y="1219" width="2" height="2.8" fill="#2a2a2a"/><rect x="127.4" y="1219" width="2" height="2.8" fill="#2a2a2a"/><rect x="103" y="1220" width="22" height="1.6" fill="#2a2a2a"/><rect x="114.5" y="1207" width="8.6" height="8" fill="#f0433c" stroke="#2a2a2a" stroke-width="1" transform="rotate(8 119 1211)"/><circle cx="108.6" cy="1208.6" r="3.7" fill="#3c8ff0" stroke="#2a2a2a" stroke-width="1"/><path d="M106.4 1218.4l5.6 -8.4l5.6 8.4z" fill="#2fae3a" stroke="#2a2a2a" stroke-width="1"/><path d="M176 1196.5q-14 1 -21 9l-6 3l5.5 1.5l-1.5 3.5q10 -1 15 -5l-2 8q10 -8 10 -20z" fill="#b4b4b4"/><path d="M156 1214l-5 9" stroke="#b4b4b4" stroke-width="2"/><path d="M298.5 1203.5h19.5M304 1203v-3.4h8.6v3.4M300.6 1204.5v16.5h15.4v-16.5" fill="none" stroke="#b4b4b4" stroke-width="2"/><path d="M305 1207.5v10.5M308.3 1207.5v10.5M311.6 1207.5v10.5" stroke="#b4b4b4" stroke-width="1.6"/><path d="M664 11.4L674.4 21.8M674.4 11.4L664 21.8" stroke="#b4b4b4" stroke-width="1.8" fill="none"/><rect x="734.8" y="9.5" width="18" height="12" rx="1" fill="#c4c4c4"/><path d="M738.6 9.5V4.5a5.2 5.2 0 0 1 10.4 -1.2" fill="none" stroke="#c4c4c4" stroke-width="2.4"/><circle cx="743.8" cy="14" r="2" fill="#232323"/><rect x="742.8" y="14" width="2" height="4.4" fill="#232323"/><rect x="1022" y="9.2" width="16" height="1.8" fill="#d4d4d4"/><rect x="1022" y="15.5" width="16" height="1.8" fill="#d4d4d4"/><rect x="1022" y="21.8" width="16" height="1.8" fill="#d4d4d4"/><path d="M845.4 57.6L838 64.8L845.4 72" fill="none" stroke="#c8c8c8" stroke-width="2.2"/><path d="M1011.8 57.6L1004.4 64.8L1011.8 72" fill="none" stroke="#2d8ceb" stroke-width="2.4"/><path d="M1181.100 155.900C1184 160 1185.600 165 1185.200 170C1184.700 176 1183 180 1180 182.200C1177 184.400 1174 184.600 1171 184.100C1166 183.400 1162 179.500 1161 174C1160.300 169 1161.800 165 1164.500 162.900C1164 166.400 1164.600 170.200 1166.100 172.800C1166.600 168 1168.600 163.500 1172 160.200C1175 157.400 1178 156 1181.100 155.900Z" fill="#fdca55"/><circle cx="1987.6" cy="1102" r="18" fill="#8a8a8a"/><path d="M1981.1 1102L1992.1 1095.4V1108.6Z" fill="#fff"/><circle cx="2035" cy="1102" r="18" fill="#8a8a8a"/><path d="M2041.5 1102L2030.5 1095.4V1108.6Z" fill="#fff"/><circle cx="2841.8" cy="563.6" r="18.4" fill="#323330"/><circle cx="2841" cy="614.5" r="18.4" fill="#323330"/><circle cx="2841.4" cy="662.2" r="18.4" fill="#323330"/><circle cx="2842.6" cy="710.3" r="18.4" fill="#323330"/><rect x="2831.8" y="553.6" width="20" height="20" rx="5.5" fill="none" stroke="#fdca55" stroke-width="2"/><circle cx="2841.8" cy="563.6" r="4.6" fill="none" stroke="#fdca55" stroke-width="2"/><circle cx="2847.4" cy="558.0" r="1.3" fill="#fdca55"/><path d="M2846.6 602.5h-3.4c-3.6 0 -5.6 2.2 -5.6 5.6v3.6h-3.6v4.6h3.6v11.4h4.8v-11.4h4l.6 -4.6h-4.6v-2.8c0 -1.4 .5 -2.2 2.2 -2.2h2z" fill="#fdca55"/><path d="M2851.9 655.6c-.8 .4 -1.6 .6 -2.5 .7c.9 -.5 1.6 -1.4 1.9 -2.4c-.8 .5 -1.8 .9 -2.8 1.1a4.4 4.4 0 0 0 -7.5 4c-3.6 -.2 -6.9 -1.9 -9 -4.6a4.4 4.4 0 0 0 1.3 5.8c-.7 0 -1.4 -.2 -2 -.5c0 2.2 1.5 4 3.5 4.4c-.6 .2 -1.3 .2 -2 .1c.6 1.7 2.2 3 4.1 3a8.8 8.8 0 0 1 -6.5 1.8a12.4 12.4 0 0 0 19.100 -11c.9 -.6 1.600 -1.400 2.200 -2.300z" fill="#fdca55"/><path d="M2832.2 720.6999999999999l1.6 -5.6a10.2 10.2 0 1 1 3.900 3.800z" fill="none" stroke="#fdca55" stroke-width="1.8" stroke-linejoin="round"/><path d="M2838.4 705.6999999999999c.5 -1 1.300 -1 1.800 -.2l1 1.900c.2 .5 0 1 -.400 1.400l-.7 .7c.8 1.600 2.100 2.900 3.700 3.700l.7 -.7c.4 -.4 .9 -.6 1.400 -.400l1.900 1c.8 .5 .8 1.300 -.2 1.800c-1.400 1 -3.200 1 -5.200 -.2c-2.400 -1.400 -4 -3 -5.400 -5.400c-.7 -1.500 -.7 -2.700 .400 -3.600z" fill="#fdca55"/><path d="M889.5 1201.9L896 1208.9L902.5 1201.9" fill="none" stroke="#c4c4c4" stroke-width="2.2"/><path d="M1423.9 1201.9L1430.4 1208.9L1436.9 1201.9" fill="none" stroke="#c4c4c4" stroke-width="2.2"/><path d="M1723.5 1201.9L1730 1208.9L1736.5 1201.9" fill="none" stroke="#c4c4c4" stroke-width="2.2"/><path d="M1867.5 1201.9L1874 1208.9L1880.5 1201.9" fill="none" stroke="#c4c4c4" stroke-width="2.2"/><rect x="652.4" y="1194" width="19" height="13.5" fill="#b4b4b4"/><path d="M659 1197v7.4l6 -3.700z" fill="#1d1d1d"/><path d="M658 1210.500h17.200v-13M663 1213.700h17v-13" fill="none" stroke="#b4b4b4" stroke-width="1.800"/><rect x="697.500" y="1193.600" width="23" height="15" fill="none" stroke="#b4b4b4" stroke-width="2"/><rect x="705.600" y="1209" width="7" height="3" fill="#b4b4b4"/><rect x="701.500" y="1212" width="15" height="2.200" fill="#b4b4b4"/><path d="M739 1193.500q14 -3.200 28 0q2.600 .5 2.600 3v6q0 7 -7 7q-4 0 -6 -4.500q-1.800 -3 -3.600 -3q-1.800 0 -3.600 3q-2 4.500 -6 4.500q-7 0 -7 -7v-6q0 -2.500 2.600 -3z" fill="#b4b4b4"/><ellipse cx="746" cy="1200.500" rx="4.200" ry="3.600" fill="#1d1d1d"/><ellipse cx="760" cy="1200.500" rx="4.200" ry="3.600" fill="#1d1d1d"/><path d="M755.500 1214.500h11l-5.500 5.500z" fill="#b4b4b4"/><rect x="924" y="1193.600" width="24" height="17" fill="none" stroke="#b4b4b4" stroke-width="2"/><path d="M936 1190.500v5M936 1208v5M921 1202h5M946 1202h5M933 1202h6M936 1199v6" stroke="#b4b4b4" stroke-width="1.800"/><path d="M939.500 1214.500h11l-5.500 5.500z" fill="#b4b4b4"/><path d="M979.500 1194.500h13.500v19.500h-24.500v-10z" fill="none" stroke="#b4b4b4" stroke-width="2"/><rect x="977.5" y="1192.5" width="4" height="4" rx="1" fill="#b4b4b4"/><rect x="991" y="1192.5" width="4" height="4" rx="1" fill="#b4b4b4"/><rect x="991" y="1212" width="4" height="4" rx="1" fill="#b4b4b4"/><rect x="966.5" y="1212" width="4" height="4" rx="1" fill="#b4b4b4"/><rect x="966.5" y="1202" width="4" height="4" rx="1" fill="#b4b4b4"/><rect x="991" y="1202" width="4" height="4" rx="1" fill="#b4b4b4"/><path d="M1151 1198.500q0 -1.500 1.500 -1.500h5l2 -3.500h11l2 3.500h5.400q1.500 0 1.500 1.500v15.500q0 1.500 -1.500 1.500h-25.400q-1.500 0 -1.500 -1.500z" fill="#b4b4b4"/><circle cx="1165.200" cy="1206.500" r="5.600" fill="#1d1d1d"/><circle cx="1165.200" cy="1206.500" r="3" fill="#b4b4b4"/><path d="M1193 1208Q1204 1196 1215 1208Q1204 1220 1193 1208Z" fill="#4a4a4a"/><circle cx="1204" cy="1208" r="3.600" fill="#1d1d1d"/><rect x="1208" y="1191.500" width="15" height="10" rx="1.500" fill="#4a4a4a"/><circle cx="1215.500" cy="1196.500" r="2.600" fill="#1d1d1d"/><circle cx="1252" cy="1196.500" r="6.200" fill="#f02828"/><circle cx="1247.200" cy="1205.500" r="6.200" fill="#2fc43a"/><circle cx="1257.200" cy="1205.500" r="6.200" fill="#3c74f0"/><path d="M1255.500 1214.500h10.500l-5.250 5.500z" fill="#b4b4b4"/><rect x="1458" y="1193.400" width="26" height="21.600" fill="none" stroke="#b4b4b4" stroke-width="2"/><rect x="1464" y="1199.600" width="14" height="9.400" fill="#b4b4b4"/><rect x="1502" y="1194.400" width="26" height="20.600" fill="#5a5a5a" stroke="#b4b4b4" stroke-width="2"/><rect x="1503" y="1195.4" width="6" height="6.200" fill="#3a3a3a"/><rect x="1503" y="1207.8000000000002" width="6" height="6.200" fill="#3a3a3a"/><rect x="1509" y="1201.6000000000001" width="6" height="6.200" fill="#3a3a3a"/><rect x="1515" y="1195.4" width="6" height="6.200" fill="#3a3a3a"/><rect x="1515" y="1207.8000000000002" width="6" height="6.200" fill="#3a3a3a"/><rect x="1521" y="1201.6000000000001" width="6" height="6.200" fill="#3a3a3a"/><path d="M1900 1197.500h30M1905 1193l-5 4.500l5 4.500M1925 1193l5 4.500l-5 4.500" fill="none" stroke="#b4b4b4" stroke-width="2"/><rect x="1908" y="1206" width="14" height="9" fill="none" stroke="#b4b4b4" stroke-width="2"/><path d="M1972.200 1206.300V1193.900H1947V1214.100H1960.800" fill="none" stroke="#b4b4b4" stroke-width="2.200"/><path d="M1962.400 1195.500l-9 10.500h5.600l-2.600 8l9.600 -11.500h-6z" fill="#b4b4b4"/><path d="M1962 1210h10.400l-5.200 6z" fill="#b4b4b4"/><path d="M1992 1197.500v14h24.600v-14" fill="none" stroke="#b4b4b4" stroke-width="2"/><path d="M1999.600 1192h9.600v5l-3 3h-3.600l-3 -3z" fill="#b4b4b4"/><path d="M1998.400 1205.500v6M2004.400 1199v12.500M2010.400 1205.500v6" stroke="#b4b4b4" stroke-width="2"/><g transform="translate(2032.5 1192.5) scale(1.02)" fill="#b4b4b4"><rect x="8" y="0" width="10" height="8"/><rect x="0" y="15" width="10" height="9"/><rect x="16" y="15" width="10" height="9"/><path d="M13 8v4M5 15v-3.2h16v3.2" fill="none" stroke="#b4b4b4" stroke-width="2"/></g><circle cx="2094.500" cy="1205" r="11.800" fill="#b4b4b4"/><circle cx="2094.500" cy="1205" r="3.400" fill="#1e1e1e"/><path d="M2106.4 1208.7Q2100.2 1211.5 2093.7 1208.5" stroke="#1e1e1e" stroke-width="1.500" fill="none"/><path d="M2097.3 1217.2Q2091.7 1213.1 2091.1 1206.0" stroke="#1e1e1e" stroke-width="1.500" fill="none"/><path d="M2085.3 1213.5Q2086.1 1206.7 2091.9 1202.5" stroke="#1e1e1e" stroke-width="1.500" fill="none"/><path d="M2082.6 1201.3Q2088.8 1198.5 2095.3 1201.5" stroke="#1e1e1e" stroke-width="1.500" fill="none"/><path d="M2091.7 1192.8Q2097.3 1196.9 2097.9 1204.0" stroke="#1e1e1e" stroke-width="1.500" fill="none"/><path d="M2103.7 1196.5Q2102.9 1203.3 2097.1 1207.5" stroke="#1e1e1e" stroke-width="1.500" fill="none"/><path d="M802.4 1260.8L811.6 1270M811.6 1260.8L802.4 1270" stroke="#b4b4b4" stroke-width="1.8" fill="none"/><rect x="996" y="1258" width="16" height="1.8" fill="#d4d4d4"/><rect x="996" y="1264.3" width="16" height="1.8" fill="#d4d4d4"/><rect x="996" y="1270.6" width="16" height="1.8" fill="#d4d4d4"/><circle cx="228.9" cy="1320.8" r="6.8" fill="none" stroke="#c0c0c0" stroke-width="2"/><path d="M224.4 1326L216.2 1333.8" stroke="#c0c0c0" stroke-width="2.2" fill="none"/><path d="M237.4 1327.3h11.5l-5.75 6z" fill="#c0c0c0"/><rect x="1283" y="1314" width="9" height="5.400" rx="1" fill="#b4b4b4"/><rect x="1301" y="1314" width="10" height="5.400" rx="1" fill="#b4b4b4"/><rect x="1301" y="1324.500" width="10" height="5.400" rx="1" fill="#b4b4b4"/><path d="M1279 1316.700h24M1296.500 1316.700v10.500h6" fill="none" stroke="#b4b4b4" stroke-width="1.800"/><path d="M1302.500 1333.500h11l-5.500 5.500z" fill="#b4b4b4"/><circle cx="1354.6" cy="1317" r="4.400" fill="#b4b4b4"/><path d="M1358.6 1317.0L1364.2 1317.0M1357.4 1319.8L1361.4 1323.8M1354.6 1321.0L1354.6 1326.6M1351.8 1319.8L1347.8 1323.8M1350.6 1317.0L1345.0 1317.0M1351.8 1314.2L1347.8 1310.2M1354.6 1313.0L1354.6 1307.4M1357.4 1314.2L1361.4 1310.2" stroke="#b4b4b4" stroke-width="2"/><path d="M1368 1319.500l10.600 5v11l-10.600 5l-10.600 -5v-11zM1357.400 1324.500l10.600 5l10.600 -5M1368 1329.500v11" fill="#232323" stroke="#b4b4b4" stroke-width="1.800" stroke-linejoin="round"/><rect x="1414.600" y="1327" width="32.400" height="10" fill="#8a8a8a"/><path d="M1420.400 1327a10.400 12.600 0 0 1 20.800 0z" fill="#b4b4b4"/><rect x="1427.600" y="1325" width="6.400" height="10.600" rx="2.400" fill="#b4b4b4"/><circle cx="1426.200" cy="1321.400" r="2.400" fill="#232323"/><circle cx="1435.400" cy="1321.400" r="2.400" fill="#232323"/><rect x="1414.600" y="1325.400" width="6.500" height="2" fill="#b4b4b4"/><rect x="1440.500" y="1325.400" width="6.500" height="2" fill="#b4b4b4"/><path d="M1469.8 1320.4v17.500h17.500M1473.4 1317.4v17h17" fill="none" stroke="#b4b4b4" stroke-width="1.800"/><rect x="1477.4" y="1311.4" width="20" height="20.600" fill="#b4b4b4"/><rect x="1482.8" y="1320.8" width="9.400" height="2" fill="#232323"/><rect x="1478.8" y="1313" width="2" height="2.200" fill="#232323"/><rect x="1494" y="1313" width="2" height="2.200" fill="#232323"/><rect x="1478.8" y="1316.8" width="2" height="2.200" fill="#232323"/><rect x="1494" y="1316.8" width="2" height="2.200" fill="#232323"/><rect x="1478.8" y="1320.6" width="2" height="2.200" fill="#232323"/><rect x="1494" y="1320.6" width="2" height="2.200" fill="#232323"/><rect x="1478.8" y="1324.4" width="2" height="2.200" fill="#232323"/><rect x="1494" y="1324.4" width="2" height="2.200" fill="#232323"/><rect x="1478.8" y="1328.2" width="2" height="2.200" fill="#232323"/><rect x="1494" y="1328.2" width="2" height="2.200" fill="#232323"/><circle cx="1530.6" cy="1328.6" r="9.400" fill="#232323" stroke="#2d8ceb" stroke-width="1.800"/><circle cx="1534.2" cy="1325" r="9.400" fill="#232323" stroke="#2d8ceb" stroke-width="1.800"/><circle cx="1539.2" cy="1320.6" r="9.400" fill="#1f5c9e" stroke="#2d8ceb" stroke-width="1.800"/><rect x="1590" y="1314" width="28" height="24" fill="none" stroke="#b4b4b4" stroke-width="2"/><path d="M1592 1318.500h5.500c8 0 6.500 15 14.500 15h5" fill="none" stroke="#b4b4b4" stroke-width="1.800"/><rect x="1596" y="1309.400" width="1.800" height="4" fill="#b4b4b4"/><rect x="1603" y="1309.400" width="1.800" height="4" fill="#b4b4b4"/><rect x="1610" y="1309.400" width="1.800" height="4" fill="#b4b4b4"/><rect x="1586.600" y="1319" width="3" height="1.800" fill="#b4b4b4"/><rect x="1586.600" y="1326" width="3" height="1.800" fill="#b4b4b4"/><rect x="1586.600" y="1333" width="3" height="1.800" fill="#b4b4b4"/><rect x="93" y="1429.3" width="18" height="12" rx="1" fill="#b4b4b4"/><path d="M96.8 1429.8V1427.2a5.2 5.2 0 0 1 10.4 0V1429.8" fill="none" stroke="#b4b4b4" stroke-width="2.4"/><circle cx="102" cy="1433.8" r="2" fill="#222"/><rect x="101" y="1433.8" width="2" height="4.4" fill="#222"/><path d="M139.4 1427.6L146 1434.4L139.4 1441.2" fill="none" stroke="#b4b4b4" stroke-width="2"/><rect x="760" y="1435" width="24" height="2" fill="#c8c8c8"/><path d="M765.6 1433.4a6.5 5 0 0 1 13 0z" fill="#c8c8c8"/><circle cx="802" cy="1432" r="3.9" fill="none" stroke="#8a8a8a" stroke-width="1.8"/><path d="M807.6 1432L812 1432M805.96 1435.96L807.8 1437.8M802 1437.6L802 1442M798.04 1435.96L796.2 1437.8M796.4 1432L792 1432M798.04 1428.04L796.2 1426.2M802 1426.4L802 1422M805.96 1428.04L807.8 1426.2" stroke="#8a8a8a" stroke-width="1.8" fill="none"/><path d="M821.8 1441.6L842.4 1422.2" stroke="#b4b4b4" stroke-width="2.4" fill="none"/><circle cx="918" cy="1436.6" r="8" fill="#222" stroke="#c4c4c4" stroke-width="1.6"/><circle cx="921.6" cy="1433.4" r="8" fill="#222" stroke="#c4c4c4" stroke-width="1.6"/><circle cx="926" cy="1428.6" r="8" fill="#6e6e6e" stroke="#c4c4c4" stroke-width="1.6"/><path d="M1176.2 1429.35L1182.2 1435.85L1188.2 1429.35" fill="none" stroke="#c4c4c4" stroke-width="2.2"/><path d="M1353.8 1429.35L1359.8 1435.85L1365.8 1429.35" fill="none" stroke="#c4c4c4" stroke-width="2.2"/><polyline points="1416.5,1423.53 1417.74,1424.99 1418.65,1426.61 1419.23,1428.36 1419.44,1430.17 1419.28,1431.99 1418.76,1433.75 1417.88,1435.4 1416.69,1436.88 1415.22,1438.15 1413.51,1439.17 1411.63,1439.9 1409.62,1440.32 1407.57,1440.41 1405.53,1440.18 1403.57,1439.63 1401.75,1438.78 1400.13,1437.65 1398.77,1436.28 1397.71,1434.72 1396.98,1433.02 1396.61,1431.23 1396.69,1429.42 1397.26,1427.69 1398.17,1426.12 1399.35,1424.74 1400.77,1423.6 1402.37,1422.73 1404.08,1422.14 1405.84,1421.84 1407.6,1421.83 1409.29,1422.1 1410.86,1422.63 1412.26,1423.38 1413.45,1424.32 1414.41,1425.41 1415.11,1426.6 1415.53,1427.85 1415.69,1429.12 1415.58,1430.36 1415.23,1431.52 1414.66,1432.57 1413.9,1433.49 1412.99,1434.24 1411.97,1434.81 1410.89,1435.2 1409.79,1435.39 1408.7,1435.39 1407.67,1435.23 1406.73,1434.9 1405.91,1434.45 1405.23,1433.89 1404.7,1433.25 1404.34,1432.57 1404.14,1431.87 1404.1,1431.19 1404.21,1430.54 1404.44,1429.96 1404.78,1429.45 1405.2,1429.05 1405.68,1428.74" fill="none" stroke="#b4b4b4" stroke-width="1.9" stroke-linecap="round" stroke-linejoin="round"/><path d="M1588 1429.35L1594 1435.85L1600 1429.35" fill="none" stroke="#c4c4c4" stroke-width="2.2"/><path d="M2 1466Q12.5 1453 23 1466Q12.5 1479 2 1466Z" fill="#b4b4b4"/><circle cx="12.5" cy="1466" r="4.6" fill="#222"/><circle cx="14.1" cy="1464.4" r="1.1" fill="#b4b4b4"/><rect x="93" y="1463.3" width="18" height="12" rx="1" fill="#b4b4b4"/><path d="M96.8 1463.8V1461.2a5.2 5.2 0 0 1 10.4 0V1463.8" fill="none" stroke="#b4b4b4" stroke-width="2.4"/><circle cx="102" cy="1467.8" r="2" fill="#222"/><rect x="101" y="1467.8" width="2" height="4.4" fill="#222"/><path d="M139.4 1461.6L146 1468.4L139.4 1475.2" fill="none" stroke="#b4b4b4" stroke-width="2"/><rect x="760" y="1469" width="24" height="2" fill="#c8c8c8"/><path d="M765.6 1467.4a6.5 5 0 0 1 13 0z" fill="#c8c8c8"/><path d="M821.8 1475.6L842.4 1456.2" stroke="#b4b4b4" stroke-width="2.4" fill="none"/><circle cx="918" cy="1470.6" r="8" fill="#222" stroke="#c4c4c4" stroke-width="1.6"/><circle cx="921.6" cy="1467.4" r="8" fill="#222" stroke="#c4c4c4" stroke-width="1.6"/><circle cx="926" cy="1462.6" r="8" fill="#6e6e6e" stroke="#c4c4c4" stroke-width="1.6"/><path d="M1176.2 1463.35L1182.2 1469.85L1188.2 1463.35" fill="none" stroke="#c4c4c4" stroke-width="2.2"/><path d="M1353.8 1463.35L1359.8 1469.85L1365.8 1463.35" fill="none" stroke="#c4c4c4" stroke-width="2.2"/><polyline points="1416.5,1457.53 1417.74,1458.99 1418.65,1460.61 1419.23,1462.36 1419.44,1464.17 1419.28,1465.99 1418.76,1467.75 1417.88,1469.4 1416.69,1470.88 1415.22,1472.15 1413.51,1473.17 1411.63,1473.9 1409.62,1474.32 1407.57,1474.41 1405.53,1474.18 1403.57,1473.63 1401.75,1472.78 1400.13,1471.65 1398.77,1470.28 1397.71,1468.72 1396.98,1467.02 1396.61,1465.23 1396.69,1463.42 1397.26,1461.69 1398.17,1460.12 1399.35,1458.74 1400.77,1457.6 1402.37,1456.73 1404.08,1456.14 1405.84,1455.84 1407.6,1455.83 1409.29,1456.1 1410.86,1456.63 1412.26,1457.38 1413.45,1458.32 1414.41,1459.41 1415.11,1460.6 1415.53,1461.85 1415.69,1463.12 1415.58,1464.36 1415.23,1465.52 1414.66,1466.57 1413.9,1467.49 1412.99,1468.24 1411.97,1468.81 1410.89,1469.2 1409.79,1469.39 1408.7,1469.39 1407.67,1469.23 1406.73,1468.9 1405.91,1468.45 1405.23,1467.89 1404.7,1467.25 1404.34,1466.57 1404.14,1465.87 1404.1,1465.19 1404.21,1464.54 1404.44,1463.96 1404.78,1463.45 1405.2,1463.05 1405.68,1462.74" fill="none" stroke="#b4b4b4" stroke-width="1.9" stroke-linecap="round" stroke-linejoin="round"/><path d="M1588 1463.35L1594 1469.85L1600 1463.35" fill="none" stroke="#c4c4c4" stroke-width="2.2"/><path d="M2 1500Q12.5 1487 23 1500Q12.5 1513 2 1500Z" fill="#b4b4b4"/><circle cx="12.5" cy="1500" r="4.6" fill="#222"/><circle cx="14.1" cy="1498.4" r="1.1" fill="#b4b4b4"/><rect x="93" y="1497.3" width="18" height="12" rx="1" fill="#b4b4b4"/><path d="M96.8 1497.8V1495.2a5.2 5.2 0 0 1 10.4 0V1497.8" fill="none" stroke="#b4b4b4" stroke-width="2.4"/><circle cx="102" cy="1501.8" r="2" fill="#222"/><rect x="101" y="1501.8" width="2" height="4.4" fill="#222"/><path d="M139.4 1495.6L146 1502.4L139.4 1509.2" fill="none" stroke="#b4b4b4" stroke-width="2"/><polygon points="274.4,1488.2 277.46,1496.39 286.19,1496.77 279.35,1502.21 281.69,1510.63 274.4,1505.81 267.11,1510.63 269.45,1502.21 262.61,1496.77 271.34,1496.39" fill="#b4b4b4"/><rect x="760" y="1503" width="24" height="2" fill="#c8c8c8"/><path d="M765.6 1501.4a6.5 5 0 0 1 13 0z" fill="#c8c8c8"/><circle cx="802" cy="1500" r="3.9" fill="none" stroke="#8a8a8a" stroke-width="1.8"/><path d="M807.6 1500L812 1500M805.96 1503.96L807.8 1505.8M802 1505.6L802 1510M798.04 1503.96L796.2 1505.8M796.4 1500L792 1500M798.04 1496.04L796.2 1494.2M802 1494.4L802 1490M805.96 1496.04L807.8 1494.2" stroke="#8a8a8a" stroke-width="1.8" fill="none"/><path d="M821.8 1509.6L842.4 1490.2" stroke="#b4b4b4" stroke-width="2.4" fill="none"/><circle cx="918" cy="1504.6" r="8" fill="#222" stroke="#c4c4c4" stroke-width="1.6"/><circle cx="921.6" cy="1501.4" r="8" fill="#222" stroke="#c4c4c4" stroke-width="1.6"/><circle cx="926" cy="1496.6" r="8" fill="#6e6e6e" stroke="#c4c4c4" stroke-width="1.6"/><circle cx="952" cy="1500.4" r="8.8" fill="none" stroke="#b4b4b4" stroke-width="1.8"/><path d="M945.8 1506.6A8.8 8.8 0 0 0 958.2 1494.2Z" fill="#b4b4b4"/><path d="M1176.2 1497.35L1182.2 1503.85L1188.2 1497.35" fill="none" stroke="#c4c4c4" stroke-width="2.2"/><path d="M1353.8 1497.35L1359.8 1503.85L1365.8 1497.35" fill="none" stroke="#c4c4c4" stroke-width="2.2"/><polyline points="1416.5,1491.53 1417.74,1492.99 1418.65,1494.61 1419.23,1496.36 1419.44,1498.17 1419.28,1499.99 1418.76,1501.75 1417.88,1503.4 1416.69,1504.88 1415.22,1506.15 1413.51,1507.17 1411.63,1507.9 1409.62,1508.32 1407.57,1508.41 1405.53,1508.18 1403.57,1507.63 1401.75,1506.78 1400.13,1505.65 1398.77,1504.28 1397.71,1502.72 1396.98,1501.02 1396.61,1499.23 1396.69,1497.42 1397.26,1495.69 1398.17,1494.12 1399.35,1492.74 1400.77,1491.6 1402.37,1490.73 1404.08,1490.14 1405.84,1489.84 1407.6,1489.83 1409.29,1490.1 1410.86,1490.63 1412.26,1491.38 1413.45,1492.32 1414.41,1493.41 1415.11,1494.6 1415.53,1495.85 1415.69,1497.12 1415.58,1498.36 1415.23,1499.52 1414.66,1500.57 1413.9,1501.49 1412.99,1502.24 1411.97,1502.81 1410.89,1503.2 1409.79,1503.39 1408.7,1503.39 1407.67,1503.23 1406.73,1502.9 1405.91,1502.45 1405.23,1501.89 1404.7,1501.25 1404.34,1500.57 1404.14,1499.87 1404.1,1499.19 1404.21,1498.54 1404.44,1497.96 1404.78,1497.45 1405.2,1497.05 1405.68,1496.74" fill="none" stroke="#b4b4b4" stroke-width="1.9" stroke-linecap="round" stroke-linejoin="round"/><path d="M1588 1497.35L1594 1503.85L1600 1497.35" fill="none" stroke="#c4c4c4" stroke-width="2.2"/><rect x="93" y="1531.3" width="18" height="12" rx="1" fill="#b4b4b4"/><path d="M96.8 1531.8V1529.2a5.2 5.2 0 0 1 10.4 0V1531.8" fill="none" stroke="#b4b4b4" stroke-width="2.4"/><circle cx="102" cy="1535.8" r="2" fill="#222"/><rect x="101" y="1535.8" width="2" height="4.4" fill="#222"/><path d="M139.4 1529.6L146 1536.4L139.4 1543.2" fill="none" stroke="#b4b4b4" stroke-width="2"/><polygon points="274.4,1522.2 277.46,1530.39 286.19,1530.77 279.35,1536.21 281.69,1544.63 274.4,1539.81 267.11,1544.63 269.45,1536.21 262.61,1530.77 271.34,1530.39" fill="#b4b4b4"/><rect x="295.6" y="1523.6" width="24" height="24" rx="1.5" fill="#222" stroke="#b4b4b4" stroke-width="1.8"/><circle cx="307.6" cy="1535.6" r="5.2" fill="#b4b4b4"/><rect x="760" y="1537" width="24" height="2" fill="#c8c8c8"/><path d="M765.6 1535.4a6.5 5 0 0 1 13 0z" fill="#c8c8c8"/><circle cx="802" cy="1534" r="3.9" fill="none" stroke="#8a8a8a" stroke-width="1.8"/><path d="M807.6 1534L812 1534M805.96 1537.96L807.8 1539.8M802 1539.6L802 1544M798.04 1537.96L796.2 1539.8M796.4 1534L792 1534M798.04 1530.04L796.2 1528.2M802 1528.4L802 1524M805.96 1530.04L807.8 1528.2" stroke="#8a8a8a" stroke-width="1.8" fill="none"/><path d="M821.8 1543.6L842.4 1524.2" stroke="#b4b4b4" stroke-width="2.4" fill="none"/><circle cx="918" cy="1538.6" r="8" fill="#222" stroke="#c4c4c4" stroke-width="1.6"/><circle cx="921.6" cy="1535.4" r="8" fill="#222" stroke="#c4c4c4" stroke-width="1.6"/><circle cx="926" cy="1530.6" r="8" fill="#6e6e6e" stroke="#c4c4c4" stroke-width="1.6"/><path d="M1176.2 1531.35L1182.2 1537.85L1188.2 1531.35" fill="none" stroke="#c4c4c4" stroke-width="2.2"/><path d="M1353.8 1531.35L1359.8 1537.85L1365.8 1531.35" fill="none" stroke="#c4c4c4" stroke-width="2.2"/><polyline points="1416.5,1525.53 1417.74,1526.99 1418.65,1528.61 1419.23,1530.36 1419.44,1532.17 1419.28,1533.99 1418.76,1535.75 1417.88,1537.4 1416.69,1538.88 1415.22,1540.15 1413.51,1541.17 1411.63,1541.9 1409.62,1542.32 1407.57,1542.41 1405.53,1542.18 1403.57,1541.63 1401.75,1540.78 1400.13,1539.65 1398.77,1538.28 1397.71,1536.72 1396.98,1535.02 1396.61,1533.23 1396.69,1531.42 1397.26,1529.69 1398.17,1528.12 1399.35,1526.74 1400.77,1525.6 1402.37,1524.73 1404.08,1524.14 1405.84,1523.84 1407.6,1523.83 1409.29,1524.1 1410.86,1524.63 1412.26,1525.38 1413.45,1526.32 1414.41,1527.41 1415.11,1528.6 1415.53,1529.85 1415.69,1531.12 1415.58,1532.36 1415.23,1533.52 1414.66,1534.57 1413.9,1535.49 1412.99,1536.24 1411.97,1536.81 1410.89,1537.2 1409.79,1537.39 1408.7,1537.39 1407.67,1537.23 1406.73,1536.9 1405.91,1536.45 1405.23,1535.89 1404.7,1535.25 1404.34,1534.57 1404.14,1533.87 1404.1,1533.19 1404.21,1532.54 1404.44,1531.96 1404.78,1531.45 1405.2,1531.05 1405.68,1530.74" fill="none" stroke="#b4b4b4" stroke-width="1.9" stroke-linecap="round" stroke-linejoin="round"/><path d="M1588 1531.35L1594 1537.85L1600 1531.35" fill="none" stroke="#c4c4c4" stroke-width="2.2"/><path d="M2 1568Q12.5 1555 23 1568Q12.5 1581 2 1568Z" fill="#b4b4b4"/><circle cx="12.5" cy="1568" r="4.6" fill="#222"/><circle cx="14.1" cy="1566.4" r="1.1" fill="#b4b4b4"/><path d="M139.4 1563.6L146 1570.4L139.4 1577.2" fill="none" stroke="#b4b4b4" stroke-width="2"/><rect x="259" y="1557" width="32" height="26" fill="#c0c0c0"/><rect x="260.6" y="1559.4" width="2" height="2.8" fill="#2a2a2a"/><rect x="287.4" y="1559.4" width="2" height="2.8" fill="#2a2a2a"/><rect x="260.6" y="1564" width="2" height="2.8" fill="#2a2a2a"/><rect x="287.4" y="1564" width="2" height="2.8" fill="#2a2a2a"/><rect x="260.6" y="1568.6" width="2" height="2.8" fill="#2a2a2a"/><rect x="287.4" y="1568.6" width="2" height="2.8" fill="#2a2a2a"/><rect x="260.6" y="1573.2" width="2" height="2.8" fill="#2a2a2a"/><rect x="287.4" y="1573.2" width="2" height="2.8" fill="#2a2a2a"/><rect x="260.6" y="1577.8" width="2" height="2.8" fill="#2a2a2a"/><rect x="287.4" y="1577.8" width="2" height="2.8" fill="#2a2a2a"/><rect x="265" y="1579" width="20" height="1.6" fill="#2a2a2a"/><rect x="275.5" y="1565" width="8.6" height="8" fill="#f0433c" stroke="#2a2a2a" stroke-width="1" transform="rotate(8 280 1569)"/><circle cx="270.6" cy="1566.6" r="3.7" fill="#3c8ff0" stroke="#2a2a2a" stroke-width="1"/><path d="M268.4 1576.4l5.6 -8.4l5.6 8.4z" fill="#2fae3a" stroke="#2a2a2a" stroke-width="1"/><rect x="295.6" y="1557.6" width="24" height="24" rx="1.5" fill="#707070" stroke="#b4b4b4" stroke-width="1.8"/><rect x="296.6" y="1558.6" width="7.4" height="7.4" fill="#4a4a4a"/><rect x="296.6" y="1573.4" width="7.4" height="7.4" fill="#4a4a4a"/><rect x="304" y="1566" width="7.4" height="7.4" fill="#4a4a4a"/><rect x="311.4" y="1558.6" width="7.4" height="7.4" fill="#4a4a4a"/><rect x="311.4" y="1573.4" width="7.4" height="7.4" fill="#4a4a4a"/><circle cx="307.6" cy="1569.6" r="6" fill="#222"/><path d="M763.4 1568.5a8.6 9.5 0 0 1 17.2 0z" fill="#b4b4b4"/><rect x="769.6" y="1568" width="4.8" height="8.5" rx="1.5" fill="#b4b4b4"/><circle cx="768.4" cy="1564.5" r="2.2" fill="#222"/><circle cx="775.6" cy="1564.5" r="2.2" fill="#222"/><rect x="760" y="1571" width="7.5" height="2" fill="#b4b4b4"/><rect x="776.5" y="1571" width="7.5" height="2" fill="#b4b4b4"/><path d="M821.8 1577.6L842.4 1558.2" stroke="#b4b4b4" stroke-width="2.4" fill="none"/><circle cx="918" cy="1572.6" r="8" fill="#222" stroke="#c4c4c4" stroke-width="1.6"/><circle cx="921.6" cy="1569.4" r="8" fill="#222" stroke="#c4c4c4" stroke-width="1.6"/><circle cx="926" cy="1564.6" r="8" fill="#6e6e6e" stroke="#c4c4c4" stroke-width="1.6"/><path d="M1176.2 1565.35L1182.2 1571.85L1188.2 1565.35" fill="none" stroke="#c4c4c4" stroke-width="2.2"/><path d="M1353.8 1565.35L1359.8 1571.85L1365.8 1565.35" fill="none" stroke="#c4c4c4" stroke-width="2.2"/><polyline points="1416.5,1559.53 1417.74,1560.99 1418.65,1562.61 1419.23,1564.36 1419.44,1566.17 1419.28,1567.99 1418.76,1569.75 1417.88,1571.4 1416.69,1572.88 1415.22,1574.15 1413.51,1575.17 1411.63,1575.9 1409.62,1576.32 1407.57,1576.41 1405.53,1576.18 1403.57,1575.63 1401.75,1574.78 1400.13,1573.65 1398.77,1572.28 1397.71,1570.72 1396.98,1569.02 1396.61,1567.23 1396.69,1565.42 1397.26,1563.69 1398.17,1562.12 1399.35,1560.74 1400.77,1559.6 1402.37,1558.73 1404.08,1558.14 1405.84,1557.84 1407.6,1557.83 1409.29,1558.1 1410.86,1558.63 1412.26,1559.38 1413.45,1560.32 1414.41,1561.41 1415.11,1562.6 1415.53,1563.85 1415.69,1565.12 1415.58,1566.36 1415.23,1567.52 1414.66,1568.57 1413.9,1569.49 1412.99,1570.24 1411.97,1570.81 1410.89,1571.2 1409.79,1571.39 1408.7,1571.39 1407.67,1571.23 1406.73,1570.9 1405.91,1570.45 1405.23,1569.89 1404.7,1569.25 1404.34,1568.57 1404.14,1567.87 1404.1,1567.19 1404.21,1566.54 1404.44,1565.96 1404.78,1565.45 1405.2,1565.05 1405.68,1564.74" fill="none" stroke="#b4b4b4" stroke-width="1.9" stroke-linecap="round" stroke-linejoin="round"/><path d="M1588 1565.35L1594 1571.85L1600 1565.35" fill="none" stroke="#c4c4c4" stroke-width="2.2"/><rect x="93" y="1599.3" width="18" height="12" rx="1" fill="#b4b4b4"/><path d="M96.8 1599.8V1597.2a5.2 5.2 0 0 1 10.4 0V1599.8" fill="none" stroke="#b4b4b4" stroke-width="2.4"/><circle cx="102" cy="1603.8" r="2" fill="#222"/><rect x="101" y="1603.8" width="2" height="4.4" fill="#222"/><path d="M139.4 1597.6L146 1604.4L139.4 1611.2" fill="none" stroke="#b4b4b4" stroke-width="2"/><polygon points="274.4,1590.2 277.46,1598.39 286.19,1598.77 279.35,1604.21 281.69,1612.63 274.4,1607.81 267.11,1612.63 269.45,1604.21 262.61,1598.77 271.34,1598.39" fill="#b4b4b4"/><rect x="295.6" y="1591.6" width="24" height="24" rx="1.5" fill="#222" stroke="#b4b4b4" stroke-width="1.8"/><circle cx="307.6" cy="1603.6" r="5.2" fill="#b4b4b4"/><rect x="760" y="1605" width="24" height="2" fill="#c8c8c8"/><path d="M765.6 1603.4a6.5 5 0 0 1 13 0z" fill="#c8c8c8"/><circle cx="802" cy="1602" r="3.9" fill="none" stroke="#8a8a8a" stroke-width="1.8"/><path d="M807.6 1602L812 1602M805.96 1605.96L807.8 1607.8M802 1607.6L802 1612M798.04 1605.96L796.2 1607.8M796.4 1602L792 1602M798.04 1598.04L796.2 1596.2M802 1596.4L802 1592M805.96 1598.04L807.8 1596.2" stroke="#8a8a8a" stroke-width="1.8" fill="none"/><path d="M821.8 1611.6L842.4 1592.2" stroke="#b4b4b4" stroke-width="2.4" fill="none"/><circle cx="918" cy="1606.6" r="8" fill="#222" stroke="#c4c4c4" stroke-width="1.6"/><circle cx="921.6" cy="1603.4" r="8" fill="#222" stroke="#c4c4c4" stroke-width="1.6"/><circle cx="926" cy="1598.6" r="8" fill="#6e6e6e" stroke="#c4c4c4" stroke-width="1.6"/><path d="M1176.2 1599.35L1182.2 1605.85L1188.2 1599.35" fill="none" stroke="#c4c4c4" stroke-width="2.2"/><path d="M1353.8 1599.35L1359.8 1605.85L1365.8 1599.35" fill="none" stroke="#c4c4c4" stroke-width="2.2"/><polyline points="1416.5,1593.53 1417.74,1594.99 1418.65,1596.61 1419.23,1598.36 1419.44,1600.17 1419.28,1601.99 1418.76,1603.75 1417.88,1605.4 1416.69,1606.88 1415.22,1608.15 1413.51,1609.17 1411.63,1609.9 1409.62,1610.32 1407.57,1610.41 1405.53,1610.18 1403.57,1609.63 1401.75,1608.78 1400.13,1607.65 1398.77,1606.28 1397.71,1604.72 1396.98,1603.02 1396.61,1601.23 1396.69,1599.42 1397.26,1597.69 1398.17,1596.12 1399.35,1594.74 1400.77,1593.6 1402.37,1592.73 1404.08,1592.14 1405.84,1591.84 1407.6,1591.83 1409.29,1592.1 1410.86,1592.63 1412.26,1593.38 1413.45,1594.32 1414.41,1595.41 1415.11,1596.6 1415.53,1597.85 1415.69,1599.12 1415.58,1600.36 1415.23,1601.52 1414.66,1602.57 1413.9,1603.49 1412.99,1604.24 1411.97,1604.81 1410.89,1605.2 1409.79,1605.39 1408.7,1605.39 1407.67,1605.23 1406.73,1604.9 1405.91,1604.45 1405.23,1603.89 1404.7,1603.25 1404.34,1602.57 1404.14,1601.87 1404.1,1601.19 1404.21,1600.54 1404.44,1599.96 1404.78,1599.45 1405.2,1599.05 1405.68,1598.74" fill="none" stroke="#b4b4b4" stroke-width="1.9" stroke-linecap="round" stroke-linejoin="round"/><path d="M1588 1599.35L1594 1605.85L1600 1599.35" fill="none" stroke="#c4c4c4" stroke-width="2.2"/><path d="M2 1636Q12.5 1623 23 1636Q12.5 1649 2 1636Z" fill="#b4b4b4"/><circle cx="12.5" cy="1636" r="4.6" fill="#222"/><circle cx="14.1" cy="1634.4" r="1.1" fill="#b4b4b4"/><path d="M139.4 1631.6L146 1638.4L139.4 1645.2" fill="none" stroke="#b4b4b4" stroke-width="2"/><rect x="259" y="1625" width="32" height="26" fill="#c0c0c0"/><rect x="260.6" y="1627.4" width="2" height="2.8" fill="#2a2a2a"/><rect x="287.4" y="1627.4" width="2" height="2.8" fill="#2a2a2a"/><rect x="260.6" y="1632" width="2" height="2.8" fill="#2a2a2a"/><rect x="287.4" y="1632" width="2" height="2.8" fill="#2a2a2a"/><rect x="260.6" y="1636.6" width="2" height="2.8" fill="#2a2a2a"/><rect x="287.4" y="1636.6" width="2" height="2.8" fill="#2a2a2a"/><rect x="260.6" y="1641.2" width="2" height="2.8" fill="#2a2a2a"/><rect x="287.4" y="1641.2" width="2" height="2.8" fill="#2a2a2a"/><rect x="260.6" y="1645.8" width="2" height="2.8" fill="#2a2a2a"/><rect x="287.4" y="1645.8" width="2" height="2.8" fill="#2a2a2a"/><rect x="265" y="1647" width="20" height="1.6" fill="#2a2a2a"/><rect x="275.5" y="1633" width="8.6" height="8" fill="#f0433c" stroke="#2a2a2a" stroke-width="1" transform="rotate(8 280 1637)"/><circle cx="270.6" cy="1634.6" r="3.7" fill="#3c8ff0" stroke="#2a2a2a" stroke-width="1"/><path d="M268.4 1644.4l5.6 -8.4l5.6 8.4z" fill="#2fae3a" stroke="#2a2a2a" stroke-width="1"/><rect x="295.6" y="1625.6" width="24" height="24" rx="1.5" fill="#707070" stroke="#b4b4b4" stroke-width="1.8"/><rect x="296.6" y="1626.6" width="7.4" height="7.4" fill="#4a4a4a"/><rect x="296.6" y="1641.4" width="7.4" height="7.4" fill="#4a4a4a"/><rect x="304" y="1634" width="7.4" height="7.4" fill="#4a4a4a"/><rect x="311.4" y="1626.6" width="7.4" height="7.4" fill="#4a4a4a"/><rect x="311.4" y="1641.4" width="7.4" height="7.4" fill="#4a4a4a"/><circle cx="307.6" cy="1637.6" r="6" fill="#222"/><path d="M763.4 1636.5a8.6 9.5 0 0 1 17.2 0z" fill="#b4b4b4"/><rect x="769.6" y="1636" width="4.8" height="8.5" rx="1.5" fill="#b4b4b4"/><circle cx="768.4" cy="1632.5" r="2.2" fill="#222"/><circle cx="775.6" cy="1632.5" r="2.2" fill="#222"/><rect x="760" y="1639" width="7.5" height="2" fill="#b4b4b4"/><rect x="776.5" y="1639" width="7.5" height="2" fill="#b4b4b4"/><path d="M821.8 1645.6L842.4 1626.2" stroke="#b4b4b4" stroke-width="2.4" fill="none"/><circle cx="918" cy="1640.6" r="8" fill="#222" stroke="#c4c4c4" stroke-width="1.6"/><circle cx="921.6" cy="1637.4" r="8" fill="#222" stroke="#c4c4c4" stroke-width="1.6"/><circle cx="926" cy="1632.6" r="8" fill="#6e6e6e" stroke="#c4c4c4" stroke-width="1.6"/><path d="M1176.2 1633.35L1182.2 1639.85L1188.2 1633.35" fill="none" stroke="#c4c4c4" stroke-width="2.2"/><path d="M1353.8 1633.35L1359.8 1639.85L1365.8 1633.35" fill="none" stroke="#c4c4c4" stroke-width="2.2"/><polyline points="1416.5,1627.53 1417.74,1628.99 1418.65,1630.61 1419.23,1632.36 1419.44,1634.17 1419.28,1635.99 1418.76,1637.75 1417.88,1639.4 1416.69,1640.88 1415.22,1642.15 1413.51,1643.17 1411.63,1643.9 1409.62,1644.32 1407.57,1644.41 1405.53,1644.18 1403.57,1643.63 1401.75,1642.78 1400.13,1641.65 1398.77,1640.28 1397.71,1638.72 1396.98,1637.02 1396.61,1635.23 1396.69,1633.42 1397.26,1631.69 1398.17,1630.12 1399.35,1628.74 1400.77,1627.6 1402.37,1626.73 1404.08,1626.14 1405.84,1625.84 1407.6,1625.83 1409.29,1626.1 1410.86,1626.63 1412.26,1627.38 1413.45,1628.32 1414.41,1629.41 1415.11,1630.6 1415.53,1631.85 1415.69,1633.12 1415.58,1634.36 1415.23,1635.52 1414.66,1636.57 1413.9,1637.49 1412.99,1638.24 1411.97,1638.81 1410.89,1639.2 1409.79,1639.39 1408.7,1639.39 1407.67,1639.23 1406.73,1638.9 1405.91,1638.45 1405.23,1637.89 1404.7,1637.25 1404.34,1636.57 1404.14,1635.87 1404.1,1635.19 1404.21,1634.54 1404.44,1633.96 1404.78,1633.45 1405.2,1633.05 1405.68,1632.74" fill="none" stroke="#b4b4b4" stroke-width="1.9" stroke-linecap="round" stroke-linejoin="round"/><path d="M1588 1633.35L1594 1639.85L1600 1633.35" fill="none" stroke="#c4c4c4" stroke-width="2.2"/><rect x="93" y="1667.3" width="18" height="12" rx="1" fill="#b4b4b4"/><path d="M96.8 1667.8V1665.2a5.2 5.2 0 0 1 10.4 0V1667.8" fill="none" stroke="#b4b4b4" stroke-width="2.4"/><circle cx="102" cy="1671.8" r="2" fill="#222"/><rect x="101" y="1671.8" width="2" height="4.4" fill="#222"/><path d="M139.4 1665.6L146 1672.4L139.4 1679.2" fill="none" stroke="#b4b4b4" stroke-width="2"/><rect x="760" y="1673" width="24" height="2" fill="#c8c8c8"/><path d="M765.6 1671.4a6.5 5 0 0 1 13 0z" fill="#c8c8c8"/><path d="M821.8 1679.6L842.4 1660.2" stroke="#b4b4b4" stroke-width="2.4" fill="none"/><circle cx="918" cy="1674.6" r="8" fill="#222" stroke="#c4c4c4" stroke-width="1.6"/><circle cx="921.6" cy="1671.4" r="8" fill="#222" stroke="#c4c4c4" stroke-width="1.6"/><circle cx="926" cy="1666.6" r="8" fill="#6e6e6e" stroke="#c4c4c4" stroke-width="1.6"/><path d="M1176.2 1667.35L1182.2 1673.85L1188.2 1667.35" fill="none" stroke="#c4c4c4" stroke-width="2.2"/><path d="M1353.8 1667.35L1359.8 1673.85L1365.8 1667.35" fill="none" stroke="#c4c4c4" stroke-width="2.2"/><polyline points="1416.5,1661.53 1417.74,1662.99 1418.65,1664.61 1419.23,1666.36 1419.44,1668.17 1419.28,1669.99 1418.76,1671.75 1417.88,1673.4 1416.69,1674.88 1415.22,1676.15 1413.51,1677.17 1411.63,1677.9 1409.62,1678.32 1407.57,1678.41 1405.53,1678.18 1403.57,1677.63 1401.75,1676.78 1400.13,1675.65 1398.77,1674.28 1397.71,1672.72 1396.98,1671.02 1396.61,1669.23 1396.69,1667.42 1397.26,1665.69 1398.17,1664.12 1399.35,1662.74 1400.77,1661.6 1402.37,1660.73 1404.08,1660.14 1405.84,1659.84 1407.6,1659.83 1409.29,1660.1 1410.86,1660.63 1412.26,1661.38 1413.45,1662.32 1414.41,1663.41 1415.11,1664.6 1415.53,1665.85 1415.69,1667.12 1415.58,1668.36 1415.23,1669.52 1414.66,1670.57 1413.9,1671.49 1412.99,1672.24 1411.97,1672.81 1410.89,1673.2 1409.79,1673.39 1408.7,1673.39 1407.67,1673.23 1406.73,1672.9 1405.91,1672.45 1405.23,1671.89 1404.7,1671.25 1404.34,1670.57 1404.14,1669.87 1404.1,1669.19 1404.21,1668.54 1404.44,1667.96 1404.78,1667.45 1405.2,1667.05 1405.68,1666.74" fill="none" stroke="#b4b4b4" stroke-width="1.9" stroke-linecap="round" stroke-linejoin="round"/><path d="M1588 1667.35L1594 1673.85L1600 1667.35" fill="none" stroke="#c4c4c4" stroke-width="2.2"/><path d="M2 1704Q12.5 1691 23 1704Q12.5 1717 2 1704Z" fill="#b4b4b4"/><circle cx="12.5" cy="1704" r="4.6" fill="#222"/><circle cx="14.1" cy="1702.4" r="1.1" fill="#b4b4b4"/><rect x="93" y="1701.3" width="18" height="12" rx="1" fill="#b4b4b4"/><path d="M96.8 1701.8V1699.2a5.2 5.2 0 0 1 10.4 0V1701.8" fill="none" stroke="#b4b4b4" stroke-width="2.4"/><circle cx="102" cy="1705.8" r="2" fill="#222"/><rect x="101" y="1705.8" width="2" height="4.4" fill="#222"/><path d="M139.4 1699.6L146 1706.4L139.4 1713.2" fill="none" stroke="#b4b4b4" stroke-width="2"/><rect x="760" y="1707" width="24" height="2" fill="#c8c8c8"/><path d="M765.6 1705.4a6.5 5 0 0 1 13 0z" fill="#c8c8c8"/><circle cx="802" cy="1704" r="3.9" fill="none" stroke="#8a8a8a" stroke-width="1.8"/><path d="M807.6 1704L812 1704M805.96 1707.96L807.8 1709.8M802 1709.6L802 1714M798.04 1707.96L796.2 1709.8M796.4 1704L792 1704M798.04 1700.04L796.2 1698.2M802 1698.4L802 1694M805.96 1700.04L807.8 1698.2" stroke="#8a8a8a" stroke-width="1.8" fill="none"/><path d="M821.8 1713.6L842.4 1694.2" stroke="#b4b4b4" stroke-width="2.4" fill="none"/><circle cx="918" cy="1708.6" r="8" fill="#222" stroke="#c4c4c4" stroke-width="1.6"/><circle cx="921.6" cy="1705.4" r="8" fill="#222" stroke="#c4c4c4" stroke-width="1.6"/><circle cx="926" cy="1700.6" r="8" fill="#6e6e6e" stroke="#c4c4c4" stroke-width="1.6"/><path d="M1176.2 1701.35L1182.2 1707.85L1188.2 1701.35" fill="none" stroke="#c4c4c4" stroke-width="2.2"/><path d="M1353.8 1701.35L1359.8 1707.85L1365.8 1701.35" fill="none" stroke="#c4c4c4" stroke-width="2.2"/><polyline points="1416.5,1695.53 1417.74,1696.99 1418.65,1698.61 1419.23,1700.36 1419.44,1702.17 1419.28,1703.99 1418.76,1705.75 1417.88,1707.4 1416.69,1708.88 1415.22,1710.15 1413.51,1711.17 1411.63,1711.9 1409.62,1712.32 1407.57,1712.41 1405.53,1712.18 1403.57,1711.63 1401.75,1710.78 1400.13,1709.65 1398.77,1708.28 1397.71,1706.72 1396.98,1705.02 1396.61,1703.23 1396.69,1701.42 1397.26,1699.69 1398.17,1698.12 1399.35,1696.74 1400.77,1695.6 1402.37,1694.73 1404.08,1694.14 1405.84,1693.84 1407.6,1693.83 1409.29,1694.1 1410.86,1694.63 1412.26,1695.38 1413.45,1696.32 1414.41,1697.41 1415.11,1698.6 1415.53,1699.85 1415.69,1701.12 1415.58,1702.36 1415.23,1703.52 1414.66,1704.57 1413.9,1705.49 1412.99,1706.24 1411.97,1706.81 1410.89,1707.2 1409.79,1707.39 1408.7,1707.39 1407.67,1707.23 1406.73,1706.9 1405.91,1706.45 1405.23,1705.89 1404.7,1705.25 1404.34,1704.57 1404.14,1703.87 1404.1,1703.19 1404.21,1702.54 1404.44,1701.96 1404.78,1701.45 1405.2,1701.05 1405.68,1700.74" fill="none" stroke="#b4b4b4" stroke-width="1.9" stroke-linecap="round" stroke-linejoin="round"/><path d="M1588 1701.35L1594 1707.85L1600 1701.35" fill="none" stroke="#c4c4c4" stroke-width="2.2"/><path d="M2 1738Q12.5 1725 23 1738Q12.5 1751 2 1738Z" fill="#b4b4b4"/><circle cx="12.5" cy="1738" r="4.6" fill="#222"/><circle cx="14.1" cy="1736.4" r="1.1" fill="#b4b4b4"/><rect x="93" y="1735.3" width="18" height="12" rx="1" fill="#b4b4b4"/><path d="M96.8 1735.8V1733.2a5.2 5.2 0 0 1 10.4 0V1735.8" fill="none" stroke="#b4b4b4" stroke-width="2.4"/><circle cx="102" cy="1739.8" r="2" fill="#222"/><rect x="101" y="1739.8" width="2" height="4.4" fill="#222"/><path d="M139.4 1733.6L146 1740.4L139.4 1747.2" fill="none" stroke="#b4b4b4" stroke-width="2"/><rect x="760" y="1741" width="24" height="2" fill="#c8c8c8"/><path d="M765.6 1739.4a6.5 5 0 0 1 13 0z" fill="#c8c8c8"/><path d="M821.8 1747.6L842.4 1728.2" stroke="#b4b4b4" stroke-width="2.4" fill="none"/><circle cx="918" cy="1742.6" r="8" fill="#222" stroke="#c4c4c4" stroke-width="1.6"/><circle cx="921.6" cy="1739.4" r="8" fill="#222" stroke="#c4c4c4" stroke-width="1.6"/><circle cx="926" cy="1734.6" r="8" fill="#6e6e6e" stroke="#c4c4c4" stroke-width="1.6"/><path d="M1176.2 1735.35L1182.2 1741.85L1188.2 1735.35" fill="none" stroke="#c4c4c4" stroke-width="2.2"/><path d="M1353.8 1735.35L1359.8 1741.85L1365.8 1735.35" fill="none" stroke="#c4c4c4" stroke-width="2.2"/><polyline points="1416.5,1729.53 1417.74,1730.99 1418.65,1732.61 1419.23,1734.36 1419.44,1736.17 1419.28,1737.99 1418.76,1739.75 1417.88,1741.4 1416.69,1742.88 1415.22,1744.15 1413.51,1745.17 1411.63,1745.9 1409.62,1746.32 1407.57,1746.41 1405.53,1746.18 1403.57,1745.63 1401.75,1744.78 1400.13,1743.65 1398.77,1742.28 1397.71,1740.72 1396.98,1739.02 1396.61,1737.23 1396.69,1735.42 1397.26,1733.69 1398.17,1732.12 1399.35,1730.74 1400.77,1729.6 1402.37,1728.73 1404.08,1728.14 1405.84,1727.84 1407.6,1727.83 1409.29,1728.1 1410.86,1728.63 1412.26,1729.38 1413.45,1730.32 1414.41,1731.41 1415.11,1732.6 1415.53,1733.85 1415.69,1735.12 1415.58,1736.36 1415.23,1737.52 1414.66,1738.57 1413.9,1739.49 1412.99,1740.24 1411.97,1740.81 1410.89,1741.2 1409.79,1741.39 1408.7,1741.39 1407.67,1741.23 1406.73,1740.9 1405.91,1740.45 1405.23,1739.89 1404.7,1739.25 1404.34,1738.57 1404.14,1737.87 1404.1,1737.19 1404.21,1736.54 1404.44,1735.96 1404.78,1735.45 1405.2,1735.05 1405.68,1734.74" fill="none" stroke="#b4b4b4" stroke-width="1.9" stroke-linecap="round" stroke-linejoin="round"/><path d="M1588 1735.35L1594 1741.85L1600 1735.35" fill="none" stroke="#c4c4c4" stroke-width="2.2"/><rect x="93" y="1769.3" width="18" height="12" rx="1" fill="#b4b4b4"/><path d="M96.8 1769.8V1767.2a5.2 5.2 0 0 1 10.4 0V1769.8" fill="none" stroke="#b4b4b4" stroke-width="2.4"/><circle cx="102" cy="1773.8" r="2" fill="#222"/><rect x="101" y="1773.8" width="2" height="4.4" fill="#222"/><path d="M139.4 1767.6L146 1774.4L139.4 1781.2" fill="none" stroke="#b4b4b4" stroke-width="2"/><rect x="295.6" y="1761.6" width="24" height="24" rx="1.5" fill="#222" stroke="#b4b4b4" stroke-width="1.8"/><circle cx="307.6" cy="1773.6" r="5.2" fill="#b4b4b4"/><rect x="760" y="1775" width="24" height="2" fill="#c8c8c8"/><path d="M765.6 1773.4a6.5 5 0 0 1 13 0z" fill="#c8c8c8"/><path d="M821.8 1781.6L842.4 1762.2" stroke="#b4b4b4" stroke-width="2.4" fill="none"/><circle cx="918" cy="1776.6" r="8" fill="#222" stroke="#c4c4c4" stroke-width="1.6"/><circle cx="921.6" cy="1773.4" r="8" fill="#222" stroke="#c4c4c4" stroke-width="1.6"/><circle cx="926" cy="1768.6" r="8" fill="#6e6e6e" stroke="#c4c4c4" stroke-width="1.6"/><path d="M1176.2 1769.35L1182.2 1775.85L1188.2 1769.35" fill="none" stroke="#c4c4c4" stroke-width="2.2"/><path d="M1353.8 1769.35L1359.8 1775.85L1365.8 1769.35" fill="none" stroke="#c4c4c4" stroke-width="2.2"/><polyline points="1416.5,1763.53 1417.74,1764.99 1418.65,1766.61 1419.23,1768.36 1419.44,1770.17 1419.28,1771.99 1418.76,1773.75 1417.88,1775.4 1416.69,1776.88 1415.22,1778.15 1413.51,1779.17 1411.63,1779.9 1409.62,1780.32 1407.57,1780.41 1405.53,1780.18 1403.57,1779.63 1401.75,1778.78 1400.13,1777.65 1398.77,1776.28 1397.71,1774.72 1396.98,1773.02 1396.61,1771.23 1396.69,1769.42 1397.26,1767.69 1398.17,1766.12 1399.35,1764.74 1400.77,1763.6 1402.37,1762.73 1404.08,1762.14 1405.84,1761.84 1407.6,1761.83 1409.29,1762.1 1410.86,1762.63 1412.26,1763.38 1413.45,1764.32 1414.41,1765.41 1415.11,1766.6 1415.53,1767.85 1415.69,1769.12 1415.58,1770.36 1415.23,1771.52 1414.66,1772.57 1413.9,1773.49 1412.99,1774.24 1411.97,1774.81 1410.89,1775.2 1409.79,1775.39 1408.7,1775.39 1407.67,1775.23 1406.73,1774.9 1405.91,1774.45 1405.23,1773.89 1404.7,1773.25 1404.34,1772.57 1404.14,1771.87 1404.1,1771.19 1404.21,1770.54 1404.44,1769.96 1404.78,1769.45 1405.2,1769.05 1405.68,1768.74" fill="none" stroke="#b4b4b4" stroke-width="1.9" stroke-linecap="round" stroke-linejoin="round"/><path d="M1588 1769.35L1594 1775.85L1600 1769.35" fill="none" stroke="#c4c4c4" stroke-width="2.2"/><path d="M2 1806Q12.5 1793 23 1806Q12.5 1819 2 1806Z" fill="#b4b4b4"/><circle cx="12.5" cy="1806" r="4.6" fill="#222"/><circle cx="14.1" cy="1804.4" r="1.1" fill="#b4b4b4"/><rect x="93" y="1803.3" width="18" height="12" rx="1" fill="#b4b4b4"/><path d="M96.8 1803.8V1801.2a5.2 5.2 0 0 1 10.4 0V1803.8" fill="none" stroke="#b4b4b4" stroke-width="2.4"/><circle cx="102" cy="1807.8" r="2" fill="#222"/><rect x="101" y="1807.8" width="2" height="4.4" fill="#222"/><path d="M139.4 1801.6L146 1808.4L139.4 1815.2" fill="none" stroke="#b4b4b4" stroke-width="2"/><rect x="295.6" y="1795.6" width="24" height="24" rx="1.5" fill="#707070" stroke="#b4b4b4" stroke-width="1.8"/><rect x="296.6" y="1796.6" width="7.4" height="7.4" fill="#4a4a4a"/><rect x="296.6" y="1811.4" width="7.4" height="7.4" fill="#4a4a4a"/><rect x="304" y="1804" width="7.4" height="7.4" fill="#4a4a4a"/><rect x="311.4" y="1796.6" width="7.4" height="7.4" fill="#4a4a4a"/><rect x="311.4" y="1811.4" width="7.4" height="7.4" fill="#4a4a4a"/><circle cx="307.6" cy="1807.6" r="6" fill="#222"/><rect x="760" y="1809" width="24" height="2" fill="#c8c8c8"/><path d="M765.6 1807.4a6.5 5 0 0 1 13 0z" fill="#c8c8c8"/><path d="M821.8 1815.6L842.4 1796.2" stroke="#b4b4b4" stroke-width="2.4" fill="none"/><circle cx="918" cy="1810.6" r="8" fill="#222" stroke="#c4c4c4" stroke-width="1.6"/><circle cx="921.6" cy="1807.4" r="8" fill="#222" stroke="#c4c4c4" stroke-width="1.6"/><circle cx="926" cy="1802.6" r="8" fill="#6e6e6e" stroke="#c4c4c4" stroke-width="1.6"/><path d="M1176.2 1803.35L1182.2 1809.85L1188.2 1803.35" fill="none" stroke="#c4c4c4" stroke-width="2.2"/><path d="M1353.8 1803.35L1359.8 1809.85L1365.8 1803.35" fill="none" stroke="#c4c4c4" stroke-width="2.2"/><polyline points="1416.5,1797.53 1417.74,1798.99 1418.65,1800.61 1419.23,1802.36 1419.44,1804.17 1419.28,1805.99 1418.76,1807.75 1417.88,1809.4 1416.69,1810.88 1415.22,1812.15 1413.51,1813.17 1411.63,1813.9 1409.62,1814.32 1407.57,1814.41 1405.53,1814.18 1403.57,1813.63 1401.75,1812.78 1400.13,1811.65 1398.77,1810.28 1397.71,1808.72 1396.98,1807.02 1396.61,1805.23 1396.69,1803.42 1397.26,1801.69 1398.17,1800.12 1399.35,1798.74 1400.77,1797.6 1402.37,1796.73 1404.08,1796.14 1405.84,1795.84 1407.6,1795.83 1409.29,1796.1 1410.86,1796.63 1412.26,1797.38 1413.45,1798.32 1414.41,1799.41 1415.11,1800.6 1415.53,1801.85 1415.69,1803.12 1415.58,1804.36 1415.23,1805.52 1414.66,1806.57 1413.9,1807.49 1412.99,1808.24 1411.97,1808.81 1410.89,1809.2 1409.79,1809.39 1408.7,1809.39 1407.67,1809.23 1406.73,1808.9 1405.91,1808.45 1405.23,1807.89 1404.7,1807.25 1404.34,1806.57 1404.14,1805.87 1404.1,1805.19 1404.21,1804.54 1404.44,1803.96 1404.78,1803.45 1405.2,1803.05 1405.68,1802.74" fill="none" stroke="#b4b4b4" stroke-width="1.9" stroke-linecap="round" stroke-linejoin="round"/><path d="M1588 1803.35L1594 1809.85L1600 1803.35" fill="none" stroke="#c4c4c4" stroke-width="2.2"/><path d="M2 1840Q12.5 1827 23 1840Q12.5 1853 2 1840Z" fill="#b4b4b4"/><circle cx="12.5" cy="1840" r="4.6" fill="#222"/><circle cx="14.1" cy="1838.4" r="1.1" fill="#b4b4b4"/><rect x="93" y="1837.3" width="18" height="12" rx="1" fill="#b4b4b4"/><path d="M96.8 1837.8V1835.2a5.2 5.2 0 0 1 10.4 0V1837.8" fill="none" stroke="#b4b4b4" stroke-width="2.4"/><circle cx="102" cy="1841.8" r="2" fill="#222"/><rect x="101" y="1841.8" width="2" height="4.4" fill="#222"/><path d="M139.4 1835.6L146 1842.4L139.4 1849.2" fill="none" stroke="#b4b4b4" stroke-width="2"/><rect x="760" y="1843" width="24" height="2" fill="#c8c8c8"/><path d="M765.6 1841.4a6.5 5 0 0 1 13 0z" fill="#c8c8c8"/><path d="M821.8 1849.6L842.4 1830.2" stroke="#b4b4b4" stroke-width="2.4" fill="none"/><circle cx="918" cy="1844.6" r="8" fill="#222" stroke="#c4c4c4" stroke-width="1.6"/><circle cx="921.6" cy="1841.4" r="8" fill="#222" stroke="#c4c4c4" stroke-width="1.6"/><circle cx="926" cy="1836.6" r="8" fill="#6e6e6e" stroke="#c4c4c4" stroke-width="1.6"/><path d="M1176.2 1837.35L1182.2 1843.85L1188.2 1837.35" fill="none" stroke="#c4c4c4" stroke-width="2.2"/><path d="M1353.8 1837.35L1359.8 1843.85L1365.8 1837.35" fill="none" stroke="#c4c4c4" stroke-width="2.2"/><polyline points="1416.5,1831.53 1417.74,1832.99 1418.65,1834.61 1419.23,1836.36 1419.44,1838.17 1419.28,1839.99 1418.76,1841.75 1417.88,1843.4 1416.69,1844.88 1415.22,1846.15 1413.51,1847.17 1411.63,1847.9 1409.62,1848.32 1407.57,1848.41 1405.53,1848.18 1403.57,1847.63 1401.75,1846.78 1400.13,1845.65 1398.77,1844.28 1397.71,1842.72 1396.98,1841.02 1396.61,1839.23 1396.69,1837.42 1397.26,1835.69 1398.17,1834.12 1399.35,1832.74 1400.77,1831.6 1402.37,1830.73 1404.08,1830.14 1405.84,1829.84 1407.6,1829.83 1409.29,1830.1 1410.86,1830.63 1412.26,1831.38 1413.45,1832.32 1414.41,1833.41 1415.11,1834.6 1415.53,1835.85 1415.69,1837.12 1415.58,1838.36 1415.23,1839.52 1414.66,1840.57 1413.9,1841.49 1412.99,1842.24 1411.97,1842.81 1410.89,1843.2 1409.79,1843.39 1408.7,1843.39 1407.67,1843.23 1406.73,1842.9 1405.91,1842.45 1405.23,1841.89 1404.7,1841.25 1404.34,1840.57 1404.14,1839.87 1404.1,1839.19 1404.21,1838.54 1404.44,1837.96 1404.78,1837.45 1405.2,1837.05 1405.68,1836.74" fill="none" stroke="#b4b4b4" stroke-width="1.9" stroke-linecap="round" stroke-linejoin="round"/><path d="M1588 1837.35L1594 1843.85L1600 1837.35" fill="none" stroke="#c4c4c4" stroke-width="2.2"/><path d="M2 1874Q12.5 1861 23 1874Q12.5 1887 2 1874Z" fill="#b4b4b4"/><circle cx="12.5" cy="1874" r="4.6" fill="#222"/><circle cx="14.1" cy="1872.4" r="1.1" fill="#b4b4b4"/><rect x="93" y="1871.3" width="18" height="12" rx="1" fill="#b4b4b4"/><path d="M96.8 1871.8V1869.2a5.2 5.2 0 0 1 10.4 0V1871.8" fill="none" stroke="#b4b4b4" stroke-width="2.4"/><circle cx="102" cy="1875.8" r="2" fill="#222"/><rect x="101" y="1875.8" width="2" height="4.4" fill="#222"/><path d="M139.4 1869.6L146 1876.4L139.4 1883.2" fill="none" stroke="#b4b4b4" stroke-width="2"/><rect x="760" y="1877" width="24" height="2" fill="#c8c8c8"/><path d="M765.6 1875.4a6.5 5 0 0 1 13 0z" fill="#c8c8c8"/><path d="M821.8 1883.6L842.4 1864.2" stroke="#b4b4b4" stroke-width="2.4" fill="none"/><circle cx="918" cy="1878.6" r="8" fill="#222" stroke="#c4c4c4" stroke-width="1.6"/><circle cx="921.6" cy="1875.4" r="8" fill="#222" stroke="#c4c4c4" stroke-width="1.6"/><circle cx="926" cy="1870.6" r="8" fill="#6e6e6e" stroke="#c4c4c4" stroke-width="1.6"/><path d="M1176.2 1871.35L1182.2 1877.85L1188.2 1871.35" fill="none" stroke="#c4c4c4" stroke-width="2.2"/><path d="M1353.8 1871.35L1359.8 1877.85L1365.8 1871.35" fill="none" stroke="#c4c4c4" stroke-width="2.2"/><polyline points="1416.5,1865.53 1417.74,1866.99 1418.65,1868.61 1419.23,1870.36 1419.44,1872.17 1419.28,1873.99 1418.76,1875.75 1417.88,1877.4 1416.69,1878.88 1415.22,1880.15 1413.51,1881.17 1411.63,1881.9 1409.62,1882.32 1407.57,1882.41 1405.53,1882.18 1403.57,1881.63 1401.75,1880.78 1400.13,1879.65 1398.77,1878.28 1397.71,1876.72 1396.98,1875.02 1396.61,1873.23 1396.69,1871.42 1397.26,1869.69 1398.17,1868.12 1399.35,1866.74 1400.77,1865.6 1402.37,1864.73 1404.08,1864.14 1405.84,1863.84 1407.6,1863.83 1409.29,1864.1 1410.86,1864.63 1412.26,1865.38 1413.45,1866.32 1414.41,1867.41 1415.11,1868.6 1415.53,1869.85 1415.69,1871.12 1415.58,1872.36 1415.23,1873.52 1414.66,1874.57 1413.9,1875.49 1412.99,1876.24 1411.97,1876.81 1410.89,1877.2 1409.79,1877.39 1408.7,1877.39 1407.67,1877.23 1406.73,1876.9 1405.91,1876.45 1405.23,1875.89 1404.7,1875.25 1404.34,1874.57 1404.14,1873.87 1404.1,1873.19 1404.21,1872.54 1404.44,1871.96 1404.78,1871.45 1405.2,1871.05 1405.68,1870.74" fill="none" stroke="#b4b4b4" stroke-width="1.9" stroke-linecap="round" stroke-linejoin="round"/><path d="M1588 1871.35L1594 1877.85L1600 1871.35" fill="none" stroke="#c4c4c4" stroke-width="2.2"/><path d="M2 1381.6Q12.5 1368.6 23 1381.6Q12.5 1394.6 2 1381.6Z" fill="#b4b4b4"/><circle cx="12.5" cy="1381.6" r="4.6" fill="#323232"/><circle cx="14.1" cy="1380" r="1.1" fill="#b4b4b4"/><path d="M31 1377h4l6.5 -6v22l-6.5 -6h-4z" fill="#b4b4b4"/><path d="M44.5 1376.5a6 6 0 0 1 0 11" fill="none" stroke="#b4b4b4" stroke-width="2"/><path d="M45 1372a10.5 10.5 0 0 1 0 20" fill="none" stroke="#b4b4b4" stroke-width="2"/><circle cx="72" cy="1382.2" r="7" fill="#b4b4b4"/><rect x="93" y="1378.9" width="18" height="12" rx="1" fill="#b4b4b4"/><path d="M96.8 1379.4V1376.8a5.2 5.2 0 0 1 10.4 0V1379.4" fill="none" stroke="#b4b4b4" stroke-width="2.4"/><circle cx="102" cy="1383.4" r="2" fill="#323232"/><rect x="101" y="1383.4" width="2" height="4.4" fill="#323232"/><g transform="translate(153.6 1369.6) scale(1.0)"><path d="M1.5 1.5H11L23.5 14L14 23.5L1.5 11Z" fill="#b4b4b4"/><circle cx="6.3" cy="6.3" r="2.5" fill="#323232"/></g><path d="M763.4 1382.5a8.6 9.5 0 0 1 17.2 0z" fill="#b4b4b4"/><rect x="769.6" y="1382" width="4.8" height="8.5" rx="1.5" fill="#b4b4b4"/><circle cx="768.4" cy="1378.5" r="2.2" fill="#323232"/><circle cx="775.6" cy="1378.5" r="2.2" fill="#323232"/><rect x="760" y="1385" width="7.5" height="2" fill="#b4b4b4"/><rect x="776.5" y="1385" width="7.5" height="2" fill="#b4b4b4"/><circle cx="802" cy="1382" r="3.9" fill="none" stroke="#b4b4b4" stroke-width="1.8"/><path d="M807.6 1382L812 1382M805.96 1385.96L807.8 1387.8M802 1387.6L802 1392M798.04 1385.96L796.2 1387.8M796.4 1382L792 1382M798.04 1378.04L796.2 1376.2M802 1376.4L802 1372M805.96 1378.04L807.8 1376.2" stroke="#b4b4b4" stroke-width="1.8" fill="none"/><rect x="822" y="1373" width="4" height="4" fill="#b4b4b4"/><rect x="826" y="1377" width="4" height="4" fill="#b4b4b4"/><rect x="830" y="1381" width="4" height="4" fill="#b4b4b4"/><rect x="834" y="1385" width="4" height="4" fill="#b4b4b4"/><rect x="838" y="1389" width="4" height="4" fill="#b4b4b4"/><path d="M879 1374.4v18.5h21" fill="none" stroke="#b4b4b4" stroke-width="1.8"/><rect x="882.5" y="1371.4" width="20" height="17.5" fill="#b4b4b4"/><rect x="888" y="1379" width="9" height="2" fill="#323232"/><rect x="884" y="1373" width="2" height="2.2" fill="#323232"/><rect x="899" y="1373" width="2" height="2.2" fill="#323232"/><rect x="884" y="1377" width="2" height="2.2" fill="#323232"/><rect x="899" y="1377" width="2" height="2.2" fill="#323232"/><rect x="884" y="1381" width="2" height="2.2" fill="#323232"/><rect x="899" y="1381" width="2" height="2.2" fill="#323232"/><rect x="884" y="1385" width="2" height="2.2" fill="#323232"/><rect x="899" y="1385" width="2" height="2.2" fill="#323232"/><circle cx="918" cy="1386.6" r="8" fill="#222" stroke="#c4c4c4" stroke-width="1.6"/><circle cx="921.6" cy="1383.4" r="8" fill="#222" stroke="#c4c4c4" stroke-width="1.6"/><circle cx="926" cy="1378.6" r="8" fill="#6e6e6e" stroke="#c4c4c4" stroke-width="1.6"/><circle cx="952" cy="1382.4" r="8.8" fill="none" stroke="#b4b4b4" stroke-width="1.8"/><path d="M945.8 1388.6A8.8 8.8 0 0 0 958.2 1376.2Z" fill="#b4b4b4"/><path d="M982 1372.1l10 5v11l-10 5l-10 -5v-11zM972 1377.1l10 5l10 -5M982 1382.1v11" fill="none" stroke="#b4b4b4" stroke-width="1.8" stroke-linejoin="round"/><path d="M1960 1519V1510.4L1970 1502L1980 1510.4V1519Z" fill="#b8b8b8" stroke="#111" stroke-width="1.8" stroke-linejoin="round"/><path d="M1939.6 1553V1544.4L1949.6 1536L1959.6 1544.4V1553Z" fill="#b8b8b8" stroke="#111" stroke-width="1.8" stroke-linejoin="round"/><path d="M1739.4 1554.6h13q-10.500 1 -13 12z" fill="#3e382c"/><path d="M2091.4 1622.6h13q-10.500 1 -13 12z" fill="#3e382c"/><path d="M2149.6 1689V1680.4L2159.6 1672L2169.6 1680.4V1689Z" fill="#b8b8b8" stroke="#111" stroke-width="1.8" stroke-linejoin="round"/><path d="M2605.51 1331h24v7.600l-10.600 19h-2.800l-10.600 -19z" fill="#2d8ceb"/><path d="M2614.91 1344.400h5.200M2617.51 1344.400v12" stroke="#1c1c1c" stroke-width="1.400" fill="none"/></svg><span class="t" id="t10001" style="font-size:29.5px;line-height:29.5px;color:#f61f1f;transform:scaleX(0.9882);left:386.2px;top:786.23px;">This is layer you need delete or cusometer</span><svg style="left:0;top:0" width="3392" height="1883" viewBox="0 0 3392 1883"><path d="M608.500 841.500L131 1788" stroke="#f61f1f" stroke-width="6.200" stroke-linecap="round" fill="none"/><path d="M122.500 1802.500L127 1778.500L143 1787Z" fill="#f61f1f"/><rect x="-20" y="1780.500" width="606.500" height="54.600" rx="2" fill="none" stroke="#f61f1f" stroke-width="6"/></svg></div></body></html>
